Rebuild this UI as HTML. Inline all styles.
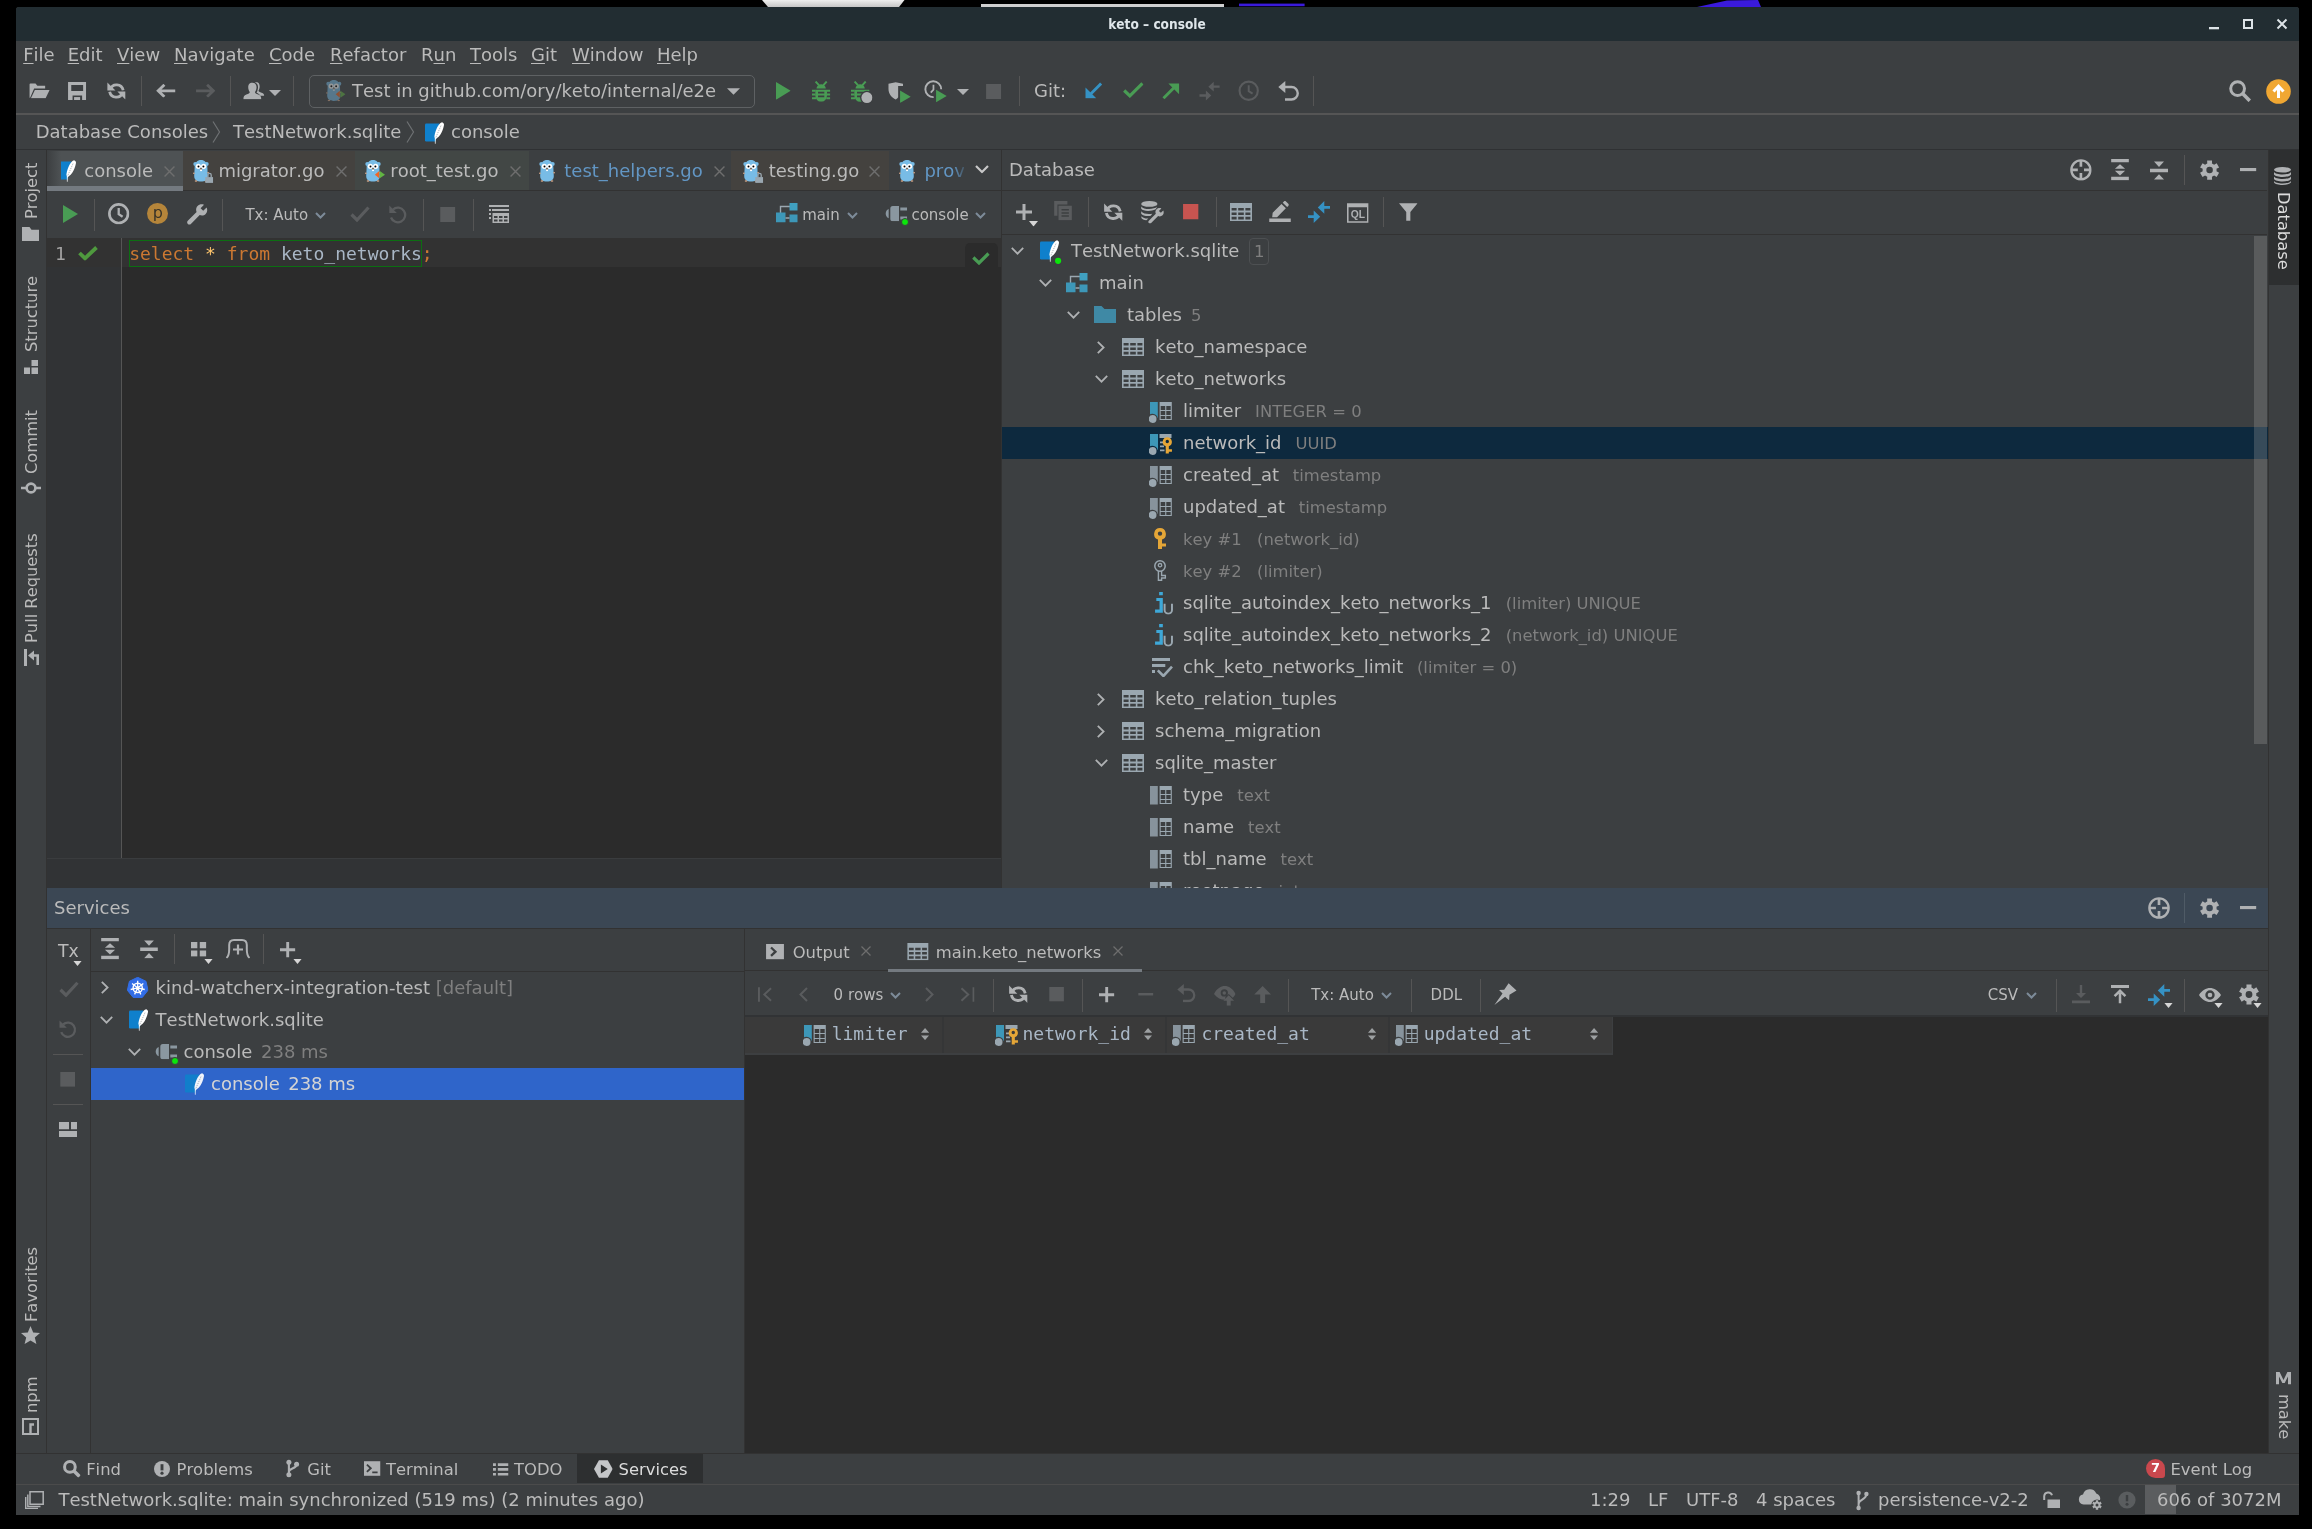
<!DOCTYPE html>
<html lang="en"><head><meta charset="utf-8"><title>keto – console</title>
<style>
*{box-sizing:border-box;margin:0;padding:0}
html,body{width:2312px;height:1529px;overflow:hidden;background:#000}
body{position:relative;font-family:"DejaVu Sans","Liberation Sans",sans-serif;font-size:18px;color:#bbbbbb;font-kerning:none;font-variant-ligatures:none;-webkit-font-smoothing:antialiased}
#root{position:absolute;left:0;top:0;width:2312px;height:1529px;will-change:transform}
.a{position:absolute}
.t{position:absolute;white-space:pre;line-height:32px;height:32px}
.g{color:#7f7f7f}
.mono{font-family:"DejaVu Sans Mono","Liberation Mono",monospace}
.vsep{position:absolute;width:1px;background:#555555}
.hl{position:absolute;height:1px}
svg{position:absolute;overflow:visible}
u{text-decoration:underline;text-underline-offset:2px;text-decoration-thickness:1px}
.rot{position:absolute;white-space:pre;transform-origin:0 0;line-height:20px;height:20px}
</style></head>
<body>
<div id="root">
<svg width="0" height="0" style="position:absolute"><defs>
<symbol id="i-folderopen" viewBox="0 0 22 17"><path d="M0 16 V1.5 Q0 0.5 1 0.5 H6.5 L8.5 3 H17 V6 H5 L0.6 16 Z" fill="#afb1b3"/><path d="M5.8 7.5 H21.8 L17.5 16.5 H1.5 Z" fill="#afb1b3"/></symbol>
<symbol id="i-save" viewBox="0 0 18 18"><path fill-rule="evenodd" d="M0 0 H18 V18 H0 Z M3.2 3 V9 H15 V3 Z M4.5 13.5 V18 H14 V13.5 Z" fill="#afb1b3"/><rect x="6" y="15" width="6" height="3" fill="#afb1b3"/></symbol>
<symbol id="i-refresh" viewBox="0 0 18.6 18.2"><path d="M2.9 7.6 A6.9 6.9 0 0 1 16.2 8.4" fill="none" stroke="#afb1b3" stroke-width="2.9"/><path d="M0.1 0.5 L0.1 8.7 L8.3 8.7 Z" fill="#afb1b3"/><path d="M15.7 10.8 A6.9 6.9 0 0 1 2.4 10" fill="none" stroke="#afb1b3" stroke-width="2.9"/><path d="M18.5 17.9 L18.5 9.7 L10.3 9.7 Z" fill="#afb1b3"/></symbol>
<symbol id="i-back" viewBox="0 0 20 14"><path d="M8.6 0.8 L2.2 7 L8.6 13.2 M2.5 7 H20" fill="none" stroke="#afb1b3" stroke-width="2.9"/></symbol>
<symbol id="i-fwd" viewBox="0 0 20 14"><path d="M11.4 0.8 L17.8 7 L11.4 13.2 M17.5 7 H0" fill="none" stroke="#5a5c5e" stroke-width="2.9"/></symbol>
<symbol id="i-users" viewBox="0 0 22 18"><path d="M13.5 0.3 C16.3 0.3 17 2.5 17 4.5 C17 6.5 16.3 8 15.8 8.6 C15.8 9.8 17 10.2 19 11 C21 11.8 21.6 12.6 21.6 14 H17.5 C17 12.5 15.5 11.8 13.8 11 C14.8 9.5 15.3 7 15.3 5 C15.3 3 14.5 1.2 12 0.6 Z" fill="#afb1b3"/><path d="M9.6 0.8 C12.8 0.8 13.8 3 13.8 5.4 C13.8 7.6 13 9.3 12.2 10.2 C12.2 11.6 13.4 12 15.6 12.9 C18 13.9 18.6 15 18.6 17.7 H0.4 C0.4 15 1 13.9 3.4 12.9 C5.6 12 6.9 11.6 6.9 10.2 C6.1 9.3 5.3 7.6 5.3 5.4 C5.3 3 6.4 0.8 9.6 0.8 Z" fill="#afb1b3"/></symbol>
<symbol id="i-tridown" viewBox="0 0 12 6"><path d="M0 0 H12 L6 6 Z" fill="#afb1b3"/></symbol>
<symbol id="i-run" viewBox="0 0 15 18"><path d="M0 0 L15 9 L0 18 Z" fill="#499c54"/></symbol>
<symbol id="i-stopgray" viewBox="0 0 16 16"><rect width="16" height="16" fill="#5a5c5e"/></symbol>
<symbol id="i-bug" viewBox="0 0 18.3 20.8"><path d="M3.6 0.5 L6.9 4.2 M14.7 0.5 L11.4 4.2" stroke="#499c54" stroke-width="1.9" fill="none"/><path d="M4.5 7.5 A4.65 4.3 0 0 1 13.8 7.5 Z" fill="#499c54"/><path d="M3.3 8.7 H15 V14.5 A5.85 6.3 0 0 1 3.3 14.5 Z" fill="#499c54"/><path d="M0 9.7 H3.5 M14.8 9.7 H18.3 M0 13.5 H3.5 M14.8 13.5 H18.3 M0 17.3 H4 M14.3 17.3 H18.3" stroke="#499c54" stroke-width="1.9" fill="none"/><path d="M6 11.6 H12.3 M6 15.4 H12.3" stroke="#3c3f41" stroke-width="1.9"/></symbol>
<symbol id="i-bugrun" viewBox="0 0 21.5 22.2"><path d="M3.6 0.5 L6.9 4.2 M14.7 0.5 L11.4 4.2" stroke="#499c54" stroke-width="1.9" fill="none"/><path d="M4.5 7.5 A4.65 4.3 0 0 1 13.8 7.5 Z" fill="#499c54"/><path d="M3.3 8.7 H15 V14.5 A5.85 6.3 0 0 1 3.3 14.5 Z" fill="#499c54"/><path d="M0 9.7 H3.5 M14.8 9.7 H18.3 M0 13.5 H3.5 M14.8 13.5 H18.3 M0 17.3 H4 M14.3 17.3 H18.3" stroke="#499c54" stroke-width="1.9" fill="none"/><path d="M6 11.6 H12.3 M6 15.4 H12.3" stroke="#3c3f41" stroke-width="1.9"/><circle cx="15.9" cy="16.6" r="6.9" fill="#3c3f41"/><circle cx="15.9" cy="16.6" r="5.5" fill="#afb1b3"/></symbol>
<symbol id="i-coverage" viewBox="0 0 24 21"><path d="M0.5 1.5 L8 0 L15.5 1.5 V4 H10.5 V15.5 C9.5 17 8.5 17.5 8 18 C4 16 0.5 12 0.5 7 Z" fill="#afb1b3"/><path d="M8 2.2 L13.5 3.3 V4 H10.5 V15.3 C9.8 16 9 16.4 8 17 Z" fill="#8a8c8e" opacity="0"/><path d="M12.5 8.5 L23.5 15 L12.5 21.5 Z" fill="#499c54"/></symbol>
<symbol id="i-profile" viewBox="0 0 24 23"><path d="M17.8 9.5 A8.2 8.2 0 1 0 10 17.7" fill="none" stroke="#afb1b3" stroke-width="2"/><path d="M9.8 5 V10 L7 13" fill="none" stroke="#afb1b3" stroke-width="1.8"/><path d="M12.5 10 L23.5 16.5 L12.5 23 Z" fill="#499c54"/></symbol>
<symbol id="i-gitupdate" viewBox="0 0 18 17"><path d="M16.5 1.5 L4 14" stroke="#3592c4" stroke-width="3" fill="none"/><path d="M0.5 16.5 V5.5 L11.5 16.5 Z" fill="#3592c4"/></symbol>
<symbol id="i-gitcommit" viewBox="0 0 21 16"><path d="M1.2 8.5 L7 14 L19.8 1.2" stroke="#499c54" stroke-width="3.2" fill="none"/></symbol>
<symbol id="i-gitpush" viewBox="0 0 18 17"><path d="M1.5 15.5 L14 3" stroke="#499c54" stroke-width="3" fill="none"/><path d="M17.5 0.5 V11.5 L6.5 0.5 Z" fill="#499c54"/></symbol>
<symbol id="i-gitmerge" viewBox="0 0 22 20"><path d="M21 5.5 H12 M0.5 14.5 H9" stroke="#5a5c5e" stroke-width="2.4" fill="none"/><path d="M15 0.5 L9.5 5.5 L15 10.5 Z M7 9.5 L12.5 14.5 L7 19.5 Z" fill="#5a5c5e"/></symbol>
<symbol id="i-historyoff" viewBox="0 0 22 22"><circle cx="11" cy="11" r="9.4" fill="none" stroke="#5a5c5e" stroke-width="2.2"/><path d="M11 5.5 V11.5 L15 14" fill="none" stroke="#5a5c5e" stroke-width="2"/></symbol>
<symbol id="i-rollback" viewBox="0 0 21 20"><path d="M5 6 H13.5 A6 6 0 0 1 13.5 18.5 H7" fill="none" stroke="#afb1b3" stroke-width="2.4"/><path d="M0.3 6 L7.3 0 V12 Z" fill="#afb1b3"/></symbol>
<symbol id="i-search" viewBox="0 0 22 22"><circle cx="8.6" cy="8.6" r="6.9" fill="none" stroke="#afb1b3" stroke-width="3"/><path d="M13.3 13.3 L20.8 20.8" stroke="#afb1b3" stroke-width="3.6"/></symbol>
<symbol id="i-updatebadge" viewBox="0 0 25 25"><circle cx="12.5" cy="12.5" r="12.3" fill="#f0a732"/><path d="M12.5 19 V8 M7.5 12.5 L12.5 7.2 L17.5 12.5" fill="none" stroke="#fff" stroke-width="3"/></symbol>
<symbol id="i-navsep" viewBox="0 0 10 22"><path d="M2 0.5 L8.5 11 L2 21.5" fill="none" stroke="#6e7173" stroke-width="1.2"/></symbol>
<symbol id="i-sqlite" viewBox="0 0 20 22.5"><path d="M0 2.7 Q0 1.5 1.2 1.5 H14.5 L10.6 19.5 H1.2 Q0 19.5 0 18.3 Z" fill="#0f80cc"/><path d="M17 0.3 C18.5 0.7 19.4 2 18.9 3.4 C18.2 7.2 16.6 10.5 15.6 12.2 C14.4 14.1 13 15.5 11.7 16.2 L10.7 17.6 L10.6 21.8 L9.9 21.8 L9.8 16 C9.3 15 9.4 14.3 9.5 13.8 C10 10.5 11 8 11.8 6.3 C13 3.5 15 1 17 0.3 Z" fill="#ffffff"/><path d="M16 3.6 L10.6 16" fill="none" stroke="#8e959b" stroke-width="0.7" stroke-dasharray="1.3 1"/></symbol>
<symbol id="i-gopher" viewBox="0 0 16 22"><circle cx="2.3" cy="3.9" r="2" fill="#78bce6"/><circle cx="13.7" cy="3.9" r="2" fill="#78bce6"/><path d="M1.6 8 C1.6 2.5 4.5 0 8 0 C11.5 0 14.4 2.5 14.4 8 C14.4 11 14.8 13 14.8 16 C14.8 20 12 21.6 8 21.6 C4 21.6 1.2 20 1.2 16 C1.2 13 1.6 11 1.6 8 Z" fill="#78bce6"/><circle cx="5.3" cy="6.3" r="2.6" fill="#fff"/><circle cx="10.6" cy="6.3" r="2.6" fill="#fff"/><circle cx="5.5" cy="6.4" r="1" fill="#000"/><circle cx="10.4" cy="6.4" r="1" fill="#000"/><ellipse cx="8" cy="8.9" rx="1.2" ry="0.9" fill="#c69c7c"/><ellipse cx="8" cy="8.3" rx="0.9" ry="0.5" fill="#444"/><rect x="7.1" y="9.8" width="1.9" height="1.3" fill="#fff"/><ellipse cx="0.9" cy="13.3" rx="0.9" ry="0.7" fill="#d9a98a"/><ellipse cx="15.1" cy="12.8" rx="0.9" ry="0.7" fill="#d9a98a"/><ellipse cx="3" cy="21" rx="1.3" ry="0.8" fill="#d9a98a"/><ellipse cx="13" cy="21" rx="1.3" ry="0.8" fill="#d9a98a"/></symbol>
<symbol id="i-gopher_run" viewBox="0 0 20 22"><circle cx="2.3" cy="3.9" r="2" fill="#78bce6"/><circle cx="13.7" cy="3.9" r="2" fill="#78bce6"/><path d="M1.6 8 C1.6 2.5 4.5 0 8 0 C11.5 0 14.4 2.5 14.4 8 C14.4 11 14.8 13 14.8 16 C14.8 20 12 21.6 8 21.6 C4 21.6 1.2 20 1.2 16 C1.2 13 1.6 11 1.6 8 Z" fill="#78bce6"/><circle cx="5.3" cy="6.3" r="2.6" fill="#fff"/><circle cx="10.6" cy="6.3" r="2.6" fill="#fff"/><circle cx="5.5" cy="6.4" r="1" fill="#000"/><circle cx="10.4" cy="6.4" r="1" fill="#000"/><ellipse cx="8" cy="8.9" rx="1.2" ry="0.9" fill="#c69c7c"/><ellipse cx="8" cy="8.3" rx="0.9" ry="0.5" fill="#444"/><rect x="7.1" y="9.8" width="1.9" height="1.3" fill="#fff"/><ellipse cx="0.9" cy="13.3" rx="0.9" ry="0.7" fill="#d9a98a"/><ellipse cx="15.1" cy="12.8" rx="0.9" ry="0.7" fill="#d9a98a"/><ellipse cx="3" cy="21" rx="1.3" ry="0.8" fill="#d9a98a"/><ellipse cx="13" cy="21" rx="1.3" ry="0.8" fill="#d9a98a"/><path d="M14.2 11.1 L9.9 14.7 L14.2 18.3 Z" fill="#f26522"/><path d="M14.8 11.1 L20 14.7 L14.8 18.3 Z" fill="#62b543"/></symbol>
<symbol id="i-gopher_run_dim" viewBox="0 0 20 22"><circle cx="2.3" cy="3.9" r="2" fill="#78bce6"/><circle cx="13.7" cy="3.9" r="2" fill="#78bce6"/><path d="M1.6 8 C1.6 2.5 4.5 0 8 0 C11.5 0 14.4 2.5 14.4 8 C14.4 11 14.8 13 14.8 16 C14.8 20 12 21.6 8 21.6 C4 21.6 1.2 20 1.2 16 C1.2 13 1.6 11 1.6 8 Z" fill="#78bce6"/><circle cx="5.3" cy="6.3" r="2.6" fill="#fff"/><circle cx="10.6" cy="6.3" r="2.6" fill="#fff"/><circle cx="5.5" cy="6.4" r="1" fill="#000"/><circle cx="10.4" cy="6.4" r="1" fill="#000"/><ellipse cx="8" cy="8.9" rx="1.2" ry="0.9" fill="#c69c7c"/><ellipse cx="8" cy="8.3" rx="0.9" ry="0.5" fill="#444"/><rect x="7.1" y="9.8" width="1.9" height="1.3" fill="#fff"/><ellipse cx="0.9" cy="13.3" rx="0.9" ry="0.7" fill="#d9a98a"/><ellipse cx="15.1" cy="12.8" rx="0.9" ry="0.7" fill="#d9a98a"/><ellipse cx="3" cy="21" rx="1.3" ry="0.8" fill="#d9a98a"/><ellipse cx="13" cy="21" rx="1.3" ry="0.8" fill="#d9a98a"/><path d="M14.2 11.1 L9.9 14.7 L14.2 18.3 Z" fill="#f26522"/><path d="M14.8 11.1 L20 14.7 L14.8 18.3 Z" fill="#62b543"/></symbol>
<symbol id="i-gopher_lock" viewBox="0 0 20.4 23"><circle cx="2.3" cy="3.9" r="2" fill="#78bce6"/><circle cx="13.7" cy="3.9" r="2" fill="#78bce6"/><path d="M1.6 8 C1.6 2.5 4.5 0 8 0 C11.5 0 14.4 2.5 14.4 8 C14.4 11 14.8 13 14.8 16 C14.8 20 12 21.6 8 21.6 C4 21.6 1.2 20 1.2 16 C1.2 13 1.6 11 1.6 8 Z" fill="#78bce6"/><circle cx="5.3" cy="6.3" r="2.6" fill="#fff"/><circle cx="10.6" cy="6.3" r="2.6" fill="#fff"/><circle cx="5.5" cy="6.4" r="1" fill="#000"/><circle cx="10.4" cy="6.4" r="1" fill="#000"/><ellipse cx="8" cy="8.9" rx="1.2" ry="0.9" fill="#c69c7c"/><ellipse cx="8" cy="8.3" rx="0.9" ry="0.5" fill="#444"/><rect x="7.1" y="9.8" width="1.9" height="1.3" fill="#fff"/><ellipse cx="0.9" cy="13.3" rx="0.9" ry="0.7" fill="#d9a98a"/><ellipse cx="15.1" cy="12.8" rx="0.9" ry="0.7" fill="#d9a98a"/><ellipse cx="3" cy="21" rx="1.3" ry="0.8" fill="#d9a98a"/><ellipse cx="13" cy="21" rx="1.3" ry="0.8" fill="#d9a98a"/><path d="M15 17.5 V15 A1.6 1.6 0 0 1 18.2 15 V17.5" fill="none" stroke="#9aa7b0" stroke-width="1.3"/><rect x="12.3" y="17.1" width="7.8" height="5.8" fill="#9aa7b0"/></symbol>
<symbol id="i-sfolder" viewBox="0 0 17 14"><path d="M0 0 H7.5 L9.5 2.7 H17 V14 H0 Z" fill="#afb1b3"/></symbol>
<symbol id="i-sstructure" viewBox="0 0 14 14"><rect x="7.5" y="0" width="6.5" height="6" fill="#afb1b3"/><rect x="0" y="7.5" width="6" height="6.5" fill="#afb1b3"/><rect x="7.5" y="7.5" width="6.5" height="6.5" fill="#afb1b3"/></symbol>
<symbol id="i-scommit" viewBox="0 0 20 12"><circle cx="10" cy="6" r="4.4" fill="none" stroke="#afb1b3" stroke-width="2.6"/><path d="M0 6 H5 M15 6 H20" stroke="#afb1b3" stroke-width="2.4"/></symbol>
<symbol id="i-spull" viewBox="0 0 15 17"><path d="M0 0 H3 V17 H0 Z" fill="#afb1b3"/><path d="M4 6.5 L10 1.5 V11.5 Z" fill="#afb1b3"/><path d="M9 6.5 H13.7 V16" fill="none" stroke="#afb1b3" stroke-width="2.6"/></symbol>
<symbol id="i-sstar" viewBox="0 0 19 18"><path d="M9.5 0 L12.2 6.4 L19 7 L13.8 11.5 L15.4 18 L9.5 14.4 L3.6 18 L5.2 11.5 L0 7 L6.8 6.4 Z" fill="#afb1b3"/></symbol>
<symbol id="i-snpm" viewBox="0 0 17 17"><rect x="1" y="1" width="15" height="15" fill="none" stroke="#afb1b3" stroke-width="2"/><path d="M8.5 16 V6.5 H12" fill="none" stroke="#afb1b3" stroke-width="2.4"/></symbol>
<symbol id="i-sdb" viewBox="0 0 17 18"><ellipse cx="8.5" cy="2.8" rx="8.5" ry="2.8" fill="#afb1b3"/><path d="M0 5 C1.5 8.3 15.5 8.3 17 5 V7.5 C15.5 10.8 1.5 10.8 0 7.5 Z M0 9.5 C1.5 12.8 15.5 12.8 17 9.5 V12 C15.5 15.3 1.5 15.3 0 12 Z M0 14 C1.5 17.3 15.5 17.3 17 14 V15.2 C15.5 18.8 1.5 18.8 0 15.2 Z" fill="#afb1b3"/></symbol>
<symbol id="i-smake" viewBox="0 0 15 12.5"><path d="M0 12.5 V0 H3.6 L7.5 8 L11.4 0 H15 V12.5 H12 V4.5 L8.7 11 H6.3 L3 4.5 V12.5 Z" fill="#afb1b3"/></symbol>
<symbol id="i-closex" viewBox="0 0 10 10"><path d="M0.5 0.5 L9.5 9.5 M9.5 0.5 L0.5 9.5" stroke="#6e6e6e" stroke-width="1.3" fill="none"/></symbol>
<symbol id="i-chevdown_l" viewBox="0 0 14 8.5"><path d="M1 1 L7 7 L13 1" stroke="#c8c8c8" stroke-width="2.2" fill="none"/></symbol>
<symbol id="i-chev" viewBox="0 0 11 7"><path d="M1 1 L5.5 5.5 L10 1" stroke="#7d8b99" stroke-width="2" fill="none"/></symbol>
<symbol id="i-clock" viewBox="0 0 21.4 21.4"><circle cx="10.7" cy="10.7" r="9.3" fill="none" stroke="#afb1b3" stroke-width="2.7"/><path d="M10.7 5 V11.2 L14.6 13.8" fill="none" stroke="#afb1b3" stroke-width="2.3"/></symbol>
<symbol id="i-wrench" viewBox="0 0 21 21"><path d="M19.6 3.4 L16.2 6.8 L13.6 4.2 L17 0.8 C14.6 -0.2 12 0.5 10.6 2 C9 3.6 8.7 6 9.6 8 L0.8 16.8 C-0.1 17.7 -0.1 19 0.8 19.9 C1.7 20.8 3 20.8 3.9 19.9 L12.7 11.1 C14.7 12 17.1 11.6 18.7 10 C20.3 8.4 20.7 5.6 19.6 3.4 Z" fill="#afb1b3"/></symbol>
<symbol id="i-checkoff" viewBox="0 0 20 16"><path d="M1.5 8.5 L7 14 L18.5 1.5" stroke="#5a5c5e" stroke-width="3.2" fill="none"/></symbol>
<symbol id="i-undooff" viewBox="0 0 18 19"><path d="M4 4.5 A7.3 7.3 0 1 1 2 12.5" fill="none" stroke="#5a5c5e" stroke-width="2.3"/><path d="M0.3 0.5 V8 H7.8 Z" fill="#5a5c5e"/></symbol>
<symbol id="i-tableview" viewBox="0 0 20 18"><path d="M0 0 H20 V2 H0 Z M3 4 H20 V6 H3 Z M0 4 H2 V6 H0 Z M0 8 H2 V10 H0 Z M0 12 H2 V14 H0 Z" fill="#afb1b3"/><path fill-rule="evenodd" d="M3.5 8 H20 V18 H3.5 Z M5 11 V13 H8.5 V11 Z M10 11 V13 H13.5 V11 Z M15 11 V13 H18.5 V11 Z M5 14.5 V16.5 H8.5 V14.5 Z M10 14.5 V16.5 H13.5 V14.5 Z M15 14.5 V16.5 H18.5 V14.5 Z" fill="#afb1b3"/></symbol>
<symbol id="i-schema" viewBox="0 0 22 19.5"><path d="M4.5 10 V3.5 H14" fill="none" stroke="#9aa7b0" stroke-width="1.4"/><rect x="13.5" y="0" width="8" height="7.5" fill="#40a0c0"/><rect x="0" y="9.5" width="9.5" height="10" fill="#3d97b8"/><rect x="13.5" y="11.5" width="8" height="8" fill="#3d97b8"/><path d="M9.5 15 H13.5" stroke="#9aa7b0" stroke-width="1.4"/></symbol>
<symbol id="i-session" viewBox="0 0 22.2 15.3"><path d="M3.7 2.9 V12.3 C-0.3 11 -0.3 4.2 3.7 2.9 Z M7.8 0 H14 V15.3 H7.8 Q5.3 15.3 5.3 12.8 V2.5 Q5.3 0 7.8 0 Z M15.3 1.4 H22.2 V4.5 H15.3 Z M15.3 10.6 H22.2 V13.5 H15.3 Z" fill="#8a97a0"/></symbol>
<symbol id="i-gcheck" viewBox="0 0 20 14.5"><path d="M1.5 7 L7 12.3 L18.5 1.5" stroke="#4f9a3e" stroke-width="3.8" fill="none"/></symbol>
<symbol id="i-gcheck2" viewBox="0 0 18 13.5"><path d="M1.3 5.5 L7 11 L16.5 1.5" stroke="#499c54" stroke-width="3.2" fill="none"/></symbol>
<symbol id="i-gear" viewBox="0 0 20 21"><path fill-rule="evenodd" d="M6.52 4.08 L7.56 3.62 L7.42 0.53 L12.58 0.53 L12.44 3.62 L13.48 4.08 L13.81 4.28 L14.74 4.95 L17.35 3.28 L19.92 7.75 L17.18 9.17 L17.30 10.31 L17.30 10.69 L17.18 11.83 L19.92 13.25 L17.35 17.72 L14.74 16.05 L13.81 16.72 L13.48 16.92 L12.44 17.38 L12.58 20.47 L7.42 20.47 L7.56 17.38 L6.52 16.92 L6.19 16.72 L5.26 16.05 L2.65 17.72 L0.08 13.25 L2.82 11.83 L2.70 10.69 L2.70 10.31 L2.82 9.17 L0.08 7.75 L2.65 3.28 L5.26 4.95 L6.19 4.28 Z M13.40 10.50 A3.40 3.40 0 1 0 6.60 10.50 A3.40 3.40 0 1 0 13.40 10.50 Z" fill="#afb1b3"/></symbol>
<symbol id="i-target" viewBox="0 0 22 22"><circle cx="11" cy="11" r="9.6" fill="none" stroke="#afb1b3" stroke-width="2.4"/><path d="M11 1.5 V7.9 M11 14.1 V20.5 M1.5 11 H7.9 M14.1 11 H20.5" stroke="#afb1b3" stroke-width="2.7"/></symbol>
<symbol id="i-expandall" viewBox="0 0 18 22"><path d="M0 0 H18 V3.4 H0 Z M0 18.2 H18 V21.6 H0 Z M9 5.3 L14.2 10 H3.8 Z M9 16.8 L14.2 12 H3.8 Z" fill="#afb1b3"/></symbol>
<symbol id="i-collapseall" viewBox="0 0 18 19"><path d="M0 7.7 H18 V11.3 H0 Z M9 6 L14 0.4 H4 Z M9 13.3 L14 18.6 H4 Z" fill="#afb1b3"/></symbol>
<symbol id="i-minus" viewBox="0 0 18 4"><rect width="18" height="3.6" fill="#afb1b3"/></symbol>
<symbol id="i-plus" viewBox="0 0 16 16"><path d="M8 0 V16 M0 8 H16" stroke="#afb1b3" stroke-width="3"/></symbol>
<symbol id="i-minitri" viewBox="0 0 9 5.5"><path d="M0 0 H9 L4.5 5.5 Z" fill="#d6d6d6"/></symbol>
<symbol id="i-copyoff" viewBox="0 0 18 20"><path d="M0 0 H13.5 V15 H0 Z" fill="#5a5c5e"/><path d="M3.3 3.7 H18 V20 H3.3 Z" fill="#3c3f41"/><path fill-rule="evenodd" d="M4.4 4.8 H18 V19.6 H4.4 Z M7.5 8.2 V9.8 H15 V8.2 Z M7.5 11.4 V13 H15 V11.4 Z M7.5 14.6 V16.2 H15 V14.6 Z" fill="#5a5c5e"/></symbol>
<symbol id="i-refresh2" viewBox="0 0 18.6 18.2"><path d="M2.9 7.6 A6.9 6.9 0 0 1 16.2 8.4" fill="none" stroke="#afb1b3" stroke-width="2.9"/><path d="M0.1 0.5 L0.1 8.7 L8.3 8.7 Z" fill="#afb1b3"/><path d="M15.7 10.8 A6.9 6.9 0 0 1 2.4 10" fill="none" stroke="#afb1b3" stroke-width="2.9"/><path d="M18.5 17.9 L18.5 9.7 L10.3 9.7 Z" fill="#afb1b3"/></symbol>
<symbol id="i-dbwrench" viewBox="0 0 24 23"><ellipse cx="8.5" cy="3" rx="8.3" ry="3" fill="#afb1b3"/><path d="M0.2 5.5 C2 8.8 13 9 16.5 6 L15 8.5 C10 11 2 10.5 0.2 8 Z M0.2 10.5 C2 13.3 8 13.8 11.5 13 L10 15.2 C6 15.8 1.5 15 0.2 13 Z M0.4 15.5 C2 17.5 5 18 7.5 17.8 L5.5 19.8 C3 19.5 1 18.5 0.4 17.5 Z" fill="#afb1b3"/><path d="M22.8 9.6 L20.3 12.1 L18.3 10.1 L20.8 7.6 C19 6.9 17 7.4 15.9 8.5 C14.7 9.7 14.4 11.5 15.1 13 L8 20.1 C7.3 20.8 7.3 21.8 8 22.5 C8.7 23.2 9.7 23.2 10.4 22.5 L17.5 15.4 C19 16.1 20.8 15.8 22 14.6 C23.2 13.4 23.6 11.3 22.8 9.6 Z" fill="#afb1b3"/></symbol>
<symbol id="i-stopred" viewBox="0 0 16 16"><rect width="16" height="16" fill="#c75450"/></symbol>
<symbol id="i-table" viewBox="0 0 22 18"><path fill-rule="evenodd" d="M0 0 H22 V18 H0 Z M1.6 5 V7.6 H6.6 V5 Z M8.2 5 V7.6 H13.8 V5 Z M15.4 5 V7.6 H20.4 V5 Z M1.6 9.4 V12 H6.6 V9.4 Z M8.2 9.4 V12 H13.8 V9.4 Z M15.4 9.4 V12 H20.4 V9.4 Z M1.6 13.8 V16.4 H6.6 V13.8 Z M8.2 13.8 V16.4 H13.8 V13.8 Z M15.4 13.8 V16.4 H20.4 V13.8 Z" fill="#9aa7b0"/></symbol>
<symbol id="i-pencil" viewBox="0 0 22 22"><path d="M0 18 H22 V21.5 H0 Z" fill="#afb1b3"/><path d="M3 16.5 L3.5 12 L12.5 3 L17 7.5 L8 16.5 Z M13.8 1.7 L15 0.5 C15.6 -0.1 16.5 -0.1 17.1 0.5 L19.5 2.9 C20.1 3.5 20.1 4.4 19.5 5 L18.3 6.2 Z" fill="#afb1b3"/></symbol>
<symbol id="i-bluearrows" viewBox="0 0 22 22"><path d="M22 5.3 H13 V8.3 H22 Z M16.3 0 L9.8 6.8 L16.3 13.5 Z M0 15.2 H9 V18.2 H0 Z M5.7 10 L12.2 16.7 L5.7 23.4 Z" fill="#3592c4" transform="scale(1,0.94)"/></symbol>
<symbol id="i-ql" viewBox="0 0 22 20"><path fill-rule="evenodd" d="M0 0 H22 V20 H0 Z M1.6 4.2 V18.4 H20.4 V4.2 Z" fill="#afb1b3"/><text x="11" y="15.2" text-anchor="middle" font-family="Liberation Sans, DejaVu Sans, sans-serif" font-weight="bold" font-size="10.5" fill="#afb1b3">QL</text></symbol>
<symbol id="i-filter" viewBox="0 0 19 18"><path d="M0 0 H19 L11.6 9 V18 H7.4 V9 Z" fill="#afb1b3"/></symbol>
<symbol id="i-tchevd" viewBox="0 0 13 8"><path d="M0.8 0.8 L6.5 6.6 L12.2 0.8" stroke="#afb1b3" stroke-width="1.8" fill="none"/></symbol>
<symbol id="i-tchevr" viewBox="0 0 8 13"><path d="M0.8 0.8 L6.6 6.5 L0.8 12.2" stroke="#afb1b3" stroke-width="1.8" fill="none"/></symbol>
<symbol id="i-tfolder" viewBox="0 0 22 17"><path d="M0 0 H7.5 L10.5 3 H22 V17 H0 Z" fill="#3f89a5"/></symbol>
<symbol id="i-sqlite_dot" viewBox="0 0 22 24.5"><path d="M0 2.7 Q0 1.5 1.2 1.5 H14.5 L10.6 19.5 H1.2 Q0 19.5 0 18.3 Z" fill="#0f80cc"/><path d="M17 0.3 C18.5 0.7 19.4 2 18.9 3.4 C18.2 7.2 16.6 10.5 15.6 12.2 C14.4 14.1 13 15.5 11.7 16.2 L10.7 17.6 L10.6 21.8 L9.9 21.8 L9.8 16 C9.3 15 9.4 14.3 9.5 13.8 C10 10.5 11 8 11.8 6.3 C13 3.5 15 1 17 0.3 Z" fill="#ffffff"/><path d="M16 3.6 L10.6 16" fill="none" stroke="#8e959b" stroke-width="0.7" stroke-dasharray="1.3 1"/><circle cx="18.1" cy="20.8" r="4.2" fill="#3c3f41"/><circle cx="18.1" cy="20.8" r="3.1" fill="#0be50b"/></symbol>
<symbol id="i-col_idx" viewBox="0 0 23 21"><rect x="1" y="0" width="7.8" height="16" fill="#3d97b8"/><path fill-rule="evenodd" d="M10.6 0 H22.8 V18 H10.6 Z M11.7 4 V8 H16.2 V4 Z M11.7 9 V13 H16.2 V9 Z M11.7 14 V17 H16.2 V14 Z M17.3 4 V8 H21.7 V4 Z M17.3 9 V13 H21.7 V9 Z M17.3 14 V17 H21.7 V14 Z " fill="#9aa7b0"/><circle cx="3.6" cy="17" r="5.2" fill="#3c3f41"/><circle cx="3.6" cy="17" r="3.9" fill="#9aa7b0"/></symbol>
<symbol id="i-col_nn" viewBox="0 0 23 21"><rect x="1" y="0" width="7.8" height="16" fill="#87939c"/><path fill-rule="evenodd" d="M10.6 0 H22.8 V18 H10.6 Z M11.7 4 V8 H16.2 V4 Z M11.7 9 V13 H16.2 V9 Z M11.7 14 V17 H16.2 V14 Z M17.3 4 V8 H21.7 V4 Z M17.3 9 V13 H21.7 V9 Z M17.3 14 V17 H21.7 V14 Z " fill="#9aa7b0"/><circle cx="3.6" cy="17" r="5.2" fill="#3c3f41"/><circle cx="3.6" cy="17" r="3.9" fill="#9aa7b0"/></symbol>
<symbol id="i-col" viewBox="0 0 23 21"><rect x="1" y="0" width="7.8" height="18.5" fill="#87939c"/><path fill-rule="evenodd" d="M10.6 0 H22.8 V18 H10.6 Z M11.7 4 V8 H16.2 V4 Z M11.7 9 V13 H16.2 V9 Z M11.7 14 V17 H16.2 V14 Z M17.3 4 V8 H21.7 V4 Z M17.3 9 V13 H21.7 V9 Z M17.3 14 V17 H21.7 V14 Z " fill="#9aa7b0"/></symbol>
<symbol id="i-col_pk" viewBox="0 0 23 21"><rect x="1" y="0" width="8" height="16" fill="#3d97b8"/><path d="M10.5 0 H22.5 V4 H10.5 Z M11 7.5 H15 V9.3 H11 Z M11 11.5 H15 V13.3 H11 Z M11 15.5 H15.5 V17.3 H11 Z" fill="#9aa7b0"/><circle cx="3.6" cy="17" r="5.2" fill="#0d293e"/><circle cx="3.6" cy="17" r="3.9" fill="#9aa7b0"/><g transform="translate(13.6,3.2) scale(0.78)"><path fill-rule="evenodd" d="M6 0 A6 6 0 0 1 8 11.6 V15.5 H12 V18.6 H8 V21 H4 V11.6 A6 6 0 0 1 6 0 Z M6 3.4 A2.2 2.2 0 0 0 6 7.8 A2.2 2.2 0 0 0 6 3.4 Z" fill="#e5a637"/></g></symbol>
<symbol id="i-key" viewBox="0 0 12.5 21"><path fill-rule="evenodd" d="M6 0 A6 6 0 0 1 8 11.6 V15.5 H12 V18.6 H8 V21 H4 V11.6 A6 6 0 0 1 6 0 Z M6 3.4 A2.2 2.2 0 0 0 6 7.8 A2.2 2.2 0 0 0 6 3.4 Z" fill="#e5a637"/></symbol>
<symbol id="i-keyo" viewBox="0 0 12.5 21"><circle cx="6" cy="6" r="5.2" fill="none" stroke="#9aa7b0" stroke-width="1.5"/><circle cx="6" cy="5.2" r="1.7" fill="none" stroke="#9aa7b0" stroke-width="1.3"/><path d="M4.4 11 V20.3 H7.6 V18 H11.4 V15.5 H7.6 V11" fill="none" stroke="#9aa7b0" stroke-width="1.4"/></symbol>
<symbol id="i-index" viewBox="0 0 19 23"><path d="M4.2 0 H8 V3.4 H4.2 Z M1.3 6.2 H8 V21.2 H0 V18 H4.6 V9.3 H1.3 Z" fill="#3ea8d8"/><path d="M9.8 12 V18.5 A3.7 3.7 0 0 0 17.4 18.5 V12" fill="none" stroke="#9aa7b0" stroke-width="2"/></symbol>
<symbol id="i-chk" viewBox="0 0 21 19"><path d="M0 0 H18 V2.9 H0 Z M0 6 H13.3 V8.9 H0 Z M0 12 H3 V15 H0 Z" fill="#9aa7b0"/><path d="M5.8 12.4 L11.4 18 L20 8.6" fill="none" stroke="#9aa7b0" stroke-width="2.6"/></symbol>
<symbol id="i-undooff2" viewBox="0 0 18 19"><path d="M4 4.5 A7.3 7.3 0 1 1 2 12.5" fill="none" stroke="#5a5c5e" stroke-width="2.4"/><path d="M0.3 0.5 V8 H7.8 Z" fill="#5a5c5e"/></symbol>
<symbol id="i-layout" viewBox="0 0 18 15"><path d="M0 0 H10 V7.3 H0 Z M12 0 H18 V7.3 H12 Z M0 9 H18 V15 H0 Z" fill="#afb1b3"/></symbol>
<symbol id="i-groupby" viewBox="0 0 16 15"><path d="M0 0 H6.5 V6.2 H0 Z M9 0 H15.6 V6.2 H9 Z M0 8.6 H6.5 V14.8 H0 Z M9 8.6 H15.6 V14.8 H9 Z" fill="#afb1b3"/></symbol>
<symbol id="i-newtab" viewBox="0 0 24 19.5"><path d="M0.5 19 C3 17 3.2 14 3.2 10 V6 C3.2 2.5 5 1 8 1 H16 C19 1 20.8 2.5 20.8 6 V10 C20.8 14 21 17 23.5 19" fill="none" stroke="#afb1b3" stroke-width="2"/><path d="M12 5.5 V15.5 M7 10.5 H17" stroke="#afb1b3" stroke-width="2.2"/></symbol>
<symbol id="i-k8s" viewBox="0 0 21.4 21.5"><path d="M10.70 0.30 L18.99 4.29 L21.03 13.26 L15.30 20.45 L6.10 20.45 L0.37 13.26 L2.41 4.29 Z" fill="#326de6" stroke="#326de6" stroke-width="1" stroke-linejoin="round"/><circle cx="10.7" cy="10.9" r="4.6" fill="none" stroke="#fff" stroke-width="1.5"/><path d="M10.7 10.9 L10.70 3.70 M10.7 10.9 L16.33 6.41 M10.7 10.9 L17.72 12.50 M10.7 10.9 L13.82 17.39 M10.7 10.9 L7.58 17.39 M10.7 10.9 L3.68 12.50 M10.7 10.9 L5.07 6.41 " stroke="#fff" stroke-width="1.3"/><circle cx="10.7" cy="10.9" r="1.3" fill="#fff"/></symbol>
<symbol id="i-outputic" viewBox="0 0 18 15.5"><rect width="18" height="15.5" fill="#afb1b3"/><path d="M5 3.5 L9.5 7.7 L5 12" fill="none" stroke="#3c3f41" stroke-width="2.3"/></symbol>
<symbol id="i-firstoff" viewBox="0 0 15 15"><path d="M1 0 V15" stroke="#5a5c5e" stroke-width="2"/><path d="M13.5 1 L6.5 7.5 L13.5 14" fill="none" stroke="#5a5c5e" stroke-width="2"/></symbol>
<symbol id="i-lastoff" viewBox="0 0 15 15"><path d="M14 0 V15" stroke="#5a5c5e" stroke-width="2"/><path d="M1.5 1 L8.5 7.5 L1.5 14" fill="none" stroke="#5a5c5e" stroke-width="2"/></symbol>
<symbol id="i-prevoff" viewBox="0 0 9 15"><path d="M8 1 L1.5 7.5 L8 14" fill="none" stroke="#5a5c5e" stroke-width="2"/></symbol>
<symbol id="i-nextoff" viewBox="0 0 9 15"><path d="M1 1 L7.5 7.5 L1 14" fill="none" stroke="#5a5c5e" stroke-width="2"/></symbol>
<symbol id="i-minusoff" viewBox="0 0 16 3"><rect width="16" height="2.8" fill="#5a5c5e"/></symbol>
<symbol id="i-revertoff" viewBox="0 0 19 18.5"><path d="M4.5 5.5 H11.5 A5.7 5.7 0 0 1 11.5 17 H6" fill="none" stroke="#5a5c5e" stroke-width="2.3"/><path d="M0.3 5.5 L6.8 0 V11 Z" fill="#5a5c5e"/></symbol>
<symbol id="i-eyeupoff" viewBox="0 0 22 20"><path fill-rule="evenodd" d="M0 8 C3 2.5 7 0 11 0 C15 0 19 2.5 22 8 C21 10 20 11 19 12 L15 8 L11.5 11.5 V14 C7 14 3 12 0 8 Z M10.5 3.3 A3.7 3.7 0 0 0 10.5 10.7 A3.7 3.7 0 0 0 10.5 3.3 Z" fill="#5a5c5e"/><circle cx="10.5" cy="7" r="1.8" fill="#5a5c5e"/><path d="M15 9.5 L20.5 15 H17 V20 H13 V15 H9.5 Z" fill="#5a5c5e"/></symbol>
<symbol id="i-upoff" viewBox="0 0 17 17.5"><path d="M8.5 0 L17 8.5 H11 V17.5 H6 V8.5 H0 Z" fill="#5a5c5e"/></symbol>
<symbol id="i-pin" viewBox="0 0 23 22.5"><path d="M0.4 22 L8.5 10.5 L5.1 7 L10.2 6.8 L14.6 0.2 L22.5 7.5 L15.5 11.7 L15.1 17.3 L11.1 13.8 Z" fill="#afb1b3"/></symbol>
<symbol id="i-downloadoff" viewBox="0 0 18 18.5"><path d="M7.8 0 H10.2 V8 H14 L9 13 L4 8 H7.8 Z M0 15.5 H18 V18.5 H0 Z" fill="#5a5c5e"/></symbol>
<symbol id="i-upload" viewBox="0 0 18 18.5"><path d="M0 0 H18 V3 H0 Z" fill="#afb1b3"/><path d="M9 18.5 V8 M3.6 11.2 L9 5.8 L14.4 11.2" fill="none" stroke="#afb1b3" stroke-width="2.5"/></symbol>
<symbol id="i-eye" viewBox="0 0 22 14"><path fill-rule="evenodd" d="M0 7 C3 2.3 7 0 11 0 C15 0 19 2.3 22 7 C19 11.7 15 14 11 14 C7 14 3 11.7 0 7 Z M11 2.3 A4.7 4.7 0 0 0 11 11.7 A4.7 4.7 0 0 0 11 2.3 Z" fill="#afb1b3"/><circle cx="11" cy="7" r="2.3" fill="#afb1b3"/></symbol>
<symbol id="i-sortud" viewBox="0 0 8 12"><path d="M4 0 L8 4.6 H0 Z M4 12 L8 7.4 H0 Z" fill="#9da0a2"/></symbol>
<symbol id="i-bsearch" viewBox="0 0 18 18"><circle cx="7.1" cy="7.1" r="5.5" fill="none" stroke="#afb1b3" stroke-width="3.1"/><path d="M11 11 L17 17" stroke="#afb1b3" stroke-width="3.6"/></symbol>
<symbol id="i-bproblems" viewBox="0 0 16 16"><circle cx="8" cy="8" r="8" fill="#afb1b3"/><path d="M8 3.2 V9.4" stroke="#3c3f41" stroke-width="2.9"/><circle cx="8" cy="12.2" r="1.6" fill="#3c3f41"/></symbol>
<symbol id="i-bgit" viewBox="0 0 14 19"><circle cx="3" cy="3" r="2.6" fill="#afb1b3"/><circle cx="3" cy="16" r="2.6" fill="#afb1b3"/><circle cx="11" cy="5" r="2.6" fill="#afb1b3"/><path d="M3 3 V16 M11 5 C11 10 3 9 3 13" fill="none" stroke="#afb1b3" stroke-width="2.2"/></symbol>
<symbol id="i-bterminal" viewBox="0 0 17 15"><rect width="17" height="15" fill="#afb1b3"/><path d="M3 3.5 L7 7.2 L3 11" fill="none" stroke="#3c3f41" stroke-width="1.9"/><path d="M8.5 11.5 H14" stroke="#3c3f41" stroke-width="1.9"/></symbol>
<symbol id="i-btodo" viewBox="0 0 16 13"><path d="M0 0 H3 V2.8 H0 Z M5 0 H16 V2.8 H5 Z M0 5 H3 V7.8 H0 Z M5 5 H16 V7.8 H5 Z M0 10 H3 V12.8 H0 Z M5 10 H16 V12.8 H5 Z" fill="#afb1b3"/></symbol>
<symbol id="i-bservices" viewBox="0 0 19 18"><path d="M5 0 H14 L19 9 L14 18 H5 L0 9 Z" fill="#c4c6c8"/><path d="M7 4.5 L14 9 L7 13.5 Z" fill="#2d2f30"/></symbol>
<symbol id="i-bstatus" viewBox="0 0 19 18"><path d="M5 0.8 H18.2 V13.2 H5 Z" fill="none" stroke="#afb1b3" stroke-width="1.5"/><path d="M2.8 3.5 V15.5 H15.5" fill="none" stroke="#afb1b3" stroke-width="1.4"/><path d="M0.7 6 V17.5 H13" fill="none" stroke="#afb1b3" stroke-width="1.4"/></symbol>
<symbol id="i-bbranch" viewBox="0 0 13 21"><circle cx="2.6" cy="3" r="2.2" fill="#afb1b3"/><circle cx="2.6" cy="18" r="2.2" fill="#afb1b3"/><circle cx="10.4" cy="4" r="2.2" fill="#afb1b3"/><path d="M2.6 3 V18 M10.4 4 C10.4 10 2.6 9 2.6 14" fill="none" stroke="#afb1b3" stroke-width="2"/></symbol>
<symbol id="i-block" viewBox="0 0 17 17"><path d="M1.2 9 V5 A4 4 0 0 1 9 4.2" fill="none" stroke="#afb1b3" stroke-width="2"/><rect x="4.5" y="8.5" width="12.5" height="8.5" fill="#afb1b3"/></symbol>
<symbol id="i-bcloud" viewBox="0 0 25 21"><path d="M5.5 15.5 A5 5 0 0 1 5 5.6 A7 7 0 0 1 18.3 4.5 A5.2 5.2 0 0 1 22 11 L13 15.5 Z" fill="#afb1b3"/><circle cx="19" cy="16" r="5.6" fill="#3c3f41"/><path fill-rule="evenodd" d="M17.38 13.01 L17.86 12.80 L17.77 11.26 L20.23 11.26 L20.14 12.80 L20.62 13.01 L20.78 13.10 L21.21 13.41 L22.50 12.57 L23.72 14.69 L22.34 15.38 L22.40 15.91 L22.40 16.09 L22.34 16.62 L23.72 17.31 L22.50 19.43 L21.21 18.59 L20.78 18.90 L20.62 18.99 L20.14 19.20 L20.23 20.74 L17.77 20.74 L17.86 19.20 L17.38 18.99 L17.22 18.90 L16.79 18.59 L15.50 19.43 L14.28 17.31 L15.66 16.62 L15.60 16.09 L15.60 15.91 L15.66 15.38 L14.28 14.69 L15.50 12.57 L16.79 13.41 L17.22 13.10 Z M20.50 16.00 A1.50 1.50 0 1 0 17.50 16.00 A1.50 1.50 0 1 0 20.50 16.00 Z" fill="#afb1b3"/></symbol>
<symbol id="i-bwarn" viewBox="0 0 18 18"><circle cx="9" cy="9" r="8.6" fill="#5a5d5f"/><path d="M9 4 V10.3" stroke="#3c3f41" stroke-width="2.4"/><circle cx="9" cy="13.3" r="1.5" fill="#3c3f41"/></symbol>
<symbol id="i-col_pk2" viewBox="0 0 23 21"><rect x="1" y="0" width="8" height="16" fill="#3d97b8"/><path d="M10.5 0 H22.5 V4 H10.5 Z M11 7.5 H15 V9.3 H11 Z M11 11.5 H15 V13.3 H11 Z M11 15.5 H15.5 V17.3 H11 Z" fill="#9aa7b0"/><circle cx="3.6" cy="17" r="5.2" fill="#3c3f41"/><circle cx="3.6" cy="17" r="3.9" fill="#9aa7b0"/><g transform="translate(13.6,3.2) scale(0.78)"><path fill-rule="evenodd" d="M6 0 A6 6 0 0 1 8 11.6 V15.5 H12 V18.6 H8 V21 H4 V11.6 A6 6 0 0 1 6 0 Z M6 3.4 A2.2 2.2 0 0 0 6 7.8 A2.2 2.2 0 0 0 6 3.4 Z" fill="#e5a637"/></g></symbol>
</defs></svg>
<svg class="a" style="left:0;top:0" width="2312" height="8"><defs><linearGradient id="wg" x1="0" y1="0" x2="0" y2="1"><stop offset="0" stop-color="#eeeeee"/><stop offset="1" stop-color="#c6c6c6"/></linearGradient></defs><path d="M762 0 L904.5 0 L899 7 L768 7 Z" fill="url(#wg)"/><rect x="981" y="4" width="243" height="3" fill="#cfcfcf"/><rect x="1239" y="3.6" width="65.6" height="2.6" fill="#3a1adc"/><path d="M1697 7 L1727 0.5 L1758 0 L1761 7 Z" fill="#3a1adc"/></svg>
<div class="a" style="left:16px;top:7px;width:2283px;height:1508px;background:#3c3f41;border-radius:3px 3px 0 0"></div>
<div class="a" style="left:16px;top:7px;width:2283px;height:34px;background:#222d32;border-radius:3px 3px 0 0"></div>
<div class="t" style="left:1056.5px;top:6.6px;width:200px;text-align:center;height:34px;line-height:34px;font-family:'DejaVu Sans Condensed','DejaVu Sans',sans-serif;font-weight:bold;font-size:14.5px;color:#dfe6ea;transform:scaleX(0.935);transform-origin:50% 50%">keto – console</div>
<svg class="a" style="left:2200px;top:10px" width="96" height="28"><rect x="9" y="17" width="10" height="2.3" fill="#dde3e7"/><rect x="44" y="10" width="8" height="8" fill="none" stroke="#dde3e7" stroke-width="2"/><path d="M77.5 9.5 L86.5 18.5 M86.5 9.5 L77.5 18.5" stroke="#dde3e7" stroke-width="2" fill="none"/></svg>
<div class="t " style="left:23.2px;top:39px;height:32px;line-height:32px;"><u>F</u>ile</div>
<div class="t " style="left:67.7px;top:39px;height:32px;line-height:32px;"><u>E</u>dit</div>
<div class="t " style="left:117px;top:39px;height:32px;line-height:32px;"><u>V</u>iew</div>
<div class="t " style="left:174px;top:39px;height:32px;line-height:32px;"><u>N</u>avigate</div>
<div class="t " style="left:269px;top:39px;height:32px;line-height:32px;"><u>C</u>ode</div>
<div class="t " style="left:330px;top:39px;height:32px;line-height:32px;"><u>R</u>efactor</div>
<div class="t " style="left:421px;top:39px;height:32px;line-height:32px;">R<u>u</u>n</div>
<div class="t " style="left:470px;top:39px;height:32px;line-height:32px;"><u>T</u>ools</div>
<div class="t " style="left:531px;top:39px;height:32px;line-height:32px;"><u>G</u>it</div>
<div class="t " style="left:572px;top:39px;height:32px;line-height:32px;"><u>W</u>indow</div>
<div class="t " style="left:657px;top:39px;height:32px;line-height:32px;"><u>H</u>elp</div>
<div class="a" style="left:16px;top:113px;width:2283px;height:2px;background:#555555;"></div>
<div class="a" style="left:141px;top:76px;width:1px;height:30px;background:#555555;"></div>
<div class="a" style="left:230px;top:76px;width:1px;height:30px;background:#555555;"></div>
<div class="a" style="left:293px;top:76px;width:1px;height:30px;background:#555555;"></div>
<div class="a" style="left:1019px;top:76px;width:1px;height:30px;background:#555555;"></div>
<div class="a" style="left:1313px;top:76px;width:1px;height:30px;background:#555555;"></div>
<svg class="a" style="left:28.7px;top:83px" width="21.3" height="15.6" ><use href="#i-folderopen"/></svg>
<svg class="a" style="left:67.9px;top:82px" width="18.2" height="18.1" ><use href="#i-save"/></svg>
<svg class="a" style="left:106.6px;top:82.3px" width="18.8" height="17.8" ><use href="#i-refresh"/></svg>
<svg class="a" style="left:155.5px;top:84.2px" width="19.5" height="13.6" ><use href="#i-back"/></svg>
<svg class="a" style="left:196px;top:84.2px" width="19.5" height="13.6" ><use href="#i-fwd"/></svg>
<svg class="a" style="left:243px;top:82px" width="21.6" height="17.6" ><use href="#i-users"/></svg>
<svg class="a" style="left:269px;top:90px" width="12" height="6" ><use href="#i-tridown"/></svg>
<div class="a" style="left:309px;top:75px;width:446px;height:33px;border:1px solid #5e6163;border-radius:5px"></div>
<svg class="a" style="left:326px;top:80px" width="19.5" height="21.4" opacity="0.45"><use href="#i-gopher_run"/></svg>
<div class="t " style="left:352px;top:75px;height:32px;line-height:32px;">Test in github.com/ory/keto/internal/e2e</div>
<svg class="a" style="left:727px;top:88px" width="13" height="7" ><use href="#i-tridown"/></svg>
<svg class="a" style="left:776.1px;top:82px" width="14.7" height="17.7" ><use href="#i-run"/></svg>
<svg class="a" style="left:811.8px;top:81px" width="18.3" height="20.8" ><use href="#i-bug"/></svg>
<svg class="a" style="left:850.9px;top:81px" width="21.5" height="22.2" ><use href="#i-bugrun"/></svg>
<svg class="a" style="left:888px;top:82px" width="23.2" height="20.7" ><use href="#i-coverage"/></svg>
<svg class="a" style="left:923.6px;top:80.4px" width="23.2" height="22.3" ><use href="#i-profile"/></svg>
<svg class="a" style="left:957px;top:89px" width="12" height="6" ><use href="#i-tridown"/></svg>
<svg class="a" style="left:986.2px;top:83.5px" width="15.3" height="15.1" ><use href="#i-stopgray"/></svg>
<div class="t " style="left:1034px;top:75px;height:32px;line-height:32px;">Git:</div>
<svg class="a" style="left:1084.6px;top:82px" width="17.6" height="16.8" ><use href="#i-gitupdate"/></svg>
<svg class="a" style="left:1122.8px;top:82.2px" width="20.6" height="16" ><use href="#i-gitcommit"/></svg>
<svg class="a" style="left:1161.8px;top:83px" width="17.6" height="16.8" ><use href="#i-gitpush"/></svg>
<svg class="a" style="left:1199.3px;top:81px" width="21.6" height="20.2" ><use href="#i-gitmerge"/></svg>
<svg class="a" style="left:1238.2px;top:80px" width="21.4" height="21.4" ><use href="#i-historyoff"/></svg>
<svg class="a" style="left:1278px;top:80px" width="21" height="22" ><use href="#i-rollback"/></svg>
<svg class="a" style="left:2229px;top:80px" width="22" height="22" ><use href="#i-search"/></svg>
<svg class="a" style="left:2266px;top:79px" width="25" height="25" ><use href="#i-updatebadge"/></svg>
<div class="t " style="left:35.7px;top:116px;height:32px;line-height:32px;">Database Consoles</div>
<div class="t " style="left:233px;top:116px;height:32px;line-height:32px;">TestNetwork.sqlite</div>
<div class="t " style="left:451px;top:116px;height:32px;line-height:32px;">console</div>
<svg class="a" style="left:211px;top:121px" width="10" height="22" ><use href="#i-navsep"/></svg>
<svg class="a" style="left:405px;top:121px" width="10" height="22" ><use href="#i-navsep"/></svg>
<svg class="a" style="left:424.8px;top:121.5px" width="20" height="22.5" ><use href="#i-sqlite"/></svg>
<div class="a" style="left:16px;top:148.8px;width:2283px;height:1.6px;background:#2f3133;"></div>
<div class="a" style="left:16px;top:150px;width:30px;height:1303px;background:#3c3f41;"></div>
<div class="a" style="left:46px;top:150px;width:1px;height:1303px;background:#323232;"></div>
<div class="rot" style="left:21.6px;top:219px;font-size:16.3px;color:#bbbbbb;transform:rotate(-90deg)">Project</div>
<svg class="a" style="left:22px;top:227px" width="17" height="14" ><use href="#i-sfolder"/></svg>
<div class="rot" style="left:21.6px;top:351.8px;font-size:16.3px;color:#bbbbbb;transform:rotate(-90deg)">Structure</div>
<svg class="a" style="left:24px;top:360px" width="14" height="14" ><use href="#i-sstructure"/></svg>
<div class="rot" style="left:21.6px;top:474.4px;font-size:16.3px;color:#bbbbbb;transform:rotate(-90deg)">Commit</div>
<svg class="a" style="left:21px;top:482px" width="20" height="12" ><use href="#i-scommit"/></svg>
<div class="rot" style="left:21.6px;top:642.9px;font-size:16.3px;color:#bbbbbb;transform:rotate(-90deg)">Pull Requests</div>
<svg class="a" style="left:24px;top:649px" width="15" height="17" ><use href="#i-spull"/></svg>
<div class="rot" style="left:21.6px;top:1322px;font-size:16.3px;color:#bbbbbb;transform:rotate(-90deg)">Favorites</div>
<svg class="a" style="left:21px;top:1326px" width="19" height="18" ><use href="#i-sstar"/></svg>
<div class="rot" style="left:21.6px;top:1412.5px;font-size:16.3px;color:#bbbbbb;transform:rotate(-90deg)">npm</div>
<svg class="a" style="left:22px;top:1418px" width="17" height="17" ><use href="#i-snpm"/></svg>
<div class="a" style="left:2268px;top:150px;width:31px;height:1303px;background:#3c3f41;"></div>
<div class="a" style="left:2268px;top:150px;width:1px;height:1303px;background:#323232;"></div>
<div class="a" style="left:2269px;top:150px;width:30px;height:135px;background:#2d2f30;"></div>
<div class="rot" style="left:2293.2px;top:192.1px;font-size:16.3px;color:#dcdcdc;transform:rotate(90deg)">Database</div>
<svg class="a" style="left:2274px;top:167px" width="17" height="18" ><use href="#i-sdb"/></svg>
<svg class="a" style="left:2275.5px;top:1372px" width="15" height="12.5" ><use href="#i-smake"/></svg>
<div class="rot" style="left:2293.5px;top:1394px;font-size:16.3px;color:#bbbbbb;transform:rotate(90deg)">make</div>
<div class="a" style="left:47px;top:150.4px;width:955px;height:39.6px;background:#3c3f41;"></div>
<div class="a" style="left:47px;top:151px;width:136px;height:39px;background:#4e5254;"></div>
<svg class="a" style="left:57.3px;top:159.7px" width="20" height="22.5" ><use href="#i-sqlite"/></svg>
<div class="t " style="left:84.3px;top:154.8px;height:32px;line-height:32px;color:#bbbbbb">console</div>
<svg class="a" style="left:163.5px;top:165.5px" width="11" height="11" ><use href="#i-closex"/></svg>
<div class="a" style="left:183px;top:151px;width:172px;height:39px;background:#44423f;"></div>
<svg class="a" style="left:193px;top:160px" width="20.4" height="23" ><use href="#i-gopher_lock"/></svg>
<div class="t " style="left:218.4px;top:154.8px;height:32px;line-height:32px;color:#bbbbbb">migrator.go</div>
<svg class="a" style="left:335.5px;top:165.5px" width="11" height="11" ><use href="#i-closex"/></svg>
<div class="a" style="left:355px;top:151px;width:174px;height:39px;background:#424745;"></div>
<svg class="a" style="left:365px;top:160px" width="20" height="22" ><use href="#i-gopher_run"/></svg>
<div class="t " style="left:390.3px;top:154.8px;height:32px;line-height:32px;color:#bbbbbb">root_test.go</div>
<svg class="a" style="left:509.5px;top:165.5px" width="11" height="11" ><use href="#i-closex"/></svg>
<div class="a" style="left:529px;top:151px;width:202px;height:39px;background:#3c3f41;"></div>
<svg class="a" style="left:539px;top:160px" width="16" height="22" ><use href="#i-gopher"/></svg>
<div class="t " style="left:564.3px;top:154.8px;height:32px;line-height:32px;color:#6296c4">test_helpers.go</div>
<svg class="a" style="left:713.5px;top:165.5px" width="11" height="11" ><use href="#i-closex"/></svg>
<div class="a" style="left:731px;top:151px;width:158px;height:39px;background:#44423f;"></div>
<svg class="a" style="left:742.7px;top:160px" width="20.4" height="23" ><use href="#i-gopher_lock"/></svg>
<div class="t " style="left:768.7px;top:154.8px;height:32px;line-height:32px;color:#bbbbbb">testing.go</div>
<svg class="a" style="left:869.2px;top:165.5px" width="11" height="11" ><use href="#i-closex"/></svg>
<div class="a" style="left:889px;top:151px;width:113px;height:39px;background:#3c3f41;"></div>
<svg class="a" style="left:898.9px;top:160px" width="16" height="22" ><use href="#i-gopher"/></svg>
<div class="t" style="left:924.4px;top:154.8px;width:40px;overflow:hidden;color:#6296c4;-webkit-mask-image:linear-gradient(90deg,#000 72%,transparent 112%);mask-image:linear-gradient(90deg,#000 72%,transparent 112%)">prov</div>
<svg class="a" style="left:975px;top:165px" width="14" height="8.5" ><use href="#i-chevdown_l"/></svg>
<div class="a" style="left:47px;top:190px;width:955px;height:1px;background:#323232;"></div>
<div class="a" style="left:47px;top:151px;width:14px;height:35px;background:linear-gradient(90deg,#3c3f41,#4e5254)"></div>
<div class="a" style="left:47px;top:186px;width:136px;height:5px;background:#747a80;"></div>
<div class="a" style="left:47px;top:191px;width:955px;height:47px;background:#3c3f41;"></div>
<div class="a" style="left:94px;top:199px;width:1px;height:32px;background:#555555;"></div>
<div class="a" style="left:222px;top:199px;width:1px;height:32px;background:#555555;"></div>
<div class="a" style="left:423px;top:199px;width:1px;height:32px;background:#555555;"></div>
<div class="a" style="left:473px;top:199px;width:1px;height:32px;background:#555555;"></div>
<svg class="a" style="left:63px;top:205px" width="15" height="18" ><use href="#i-run"/></svg>
<svg class="a" style="left:108.2px;top:203.1px" width="21.4" height="21.4" ><use href="#i-clock"/></svg>
<div class="a" style="left:147.2px;top:203.1px;width:21.3px;height:21.3px;border-radius:50%;background:#b5853a"></div>
<div class="t " style="left:147.2px;top:201.5px;height:22px;line-height:22px;width:21.3px;text-align:center;color:#3a3428;font-size:16px">p</div>
<svg class="a" style="left:187px;top:203.5px" width="21" height="21" ><use href="#i-wrench"/></svg>
<div class="t " style="left:245.4px;top:198.5px;height:32px;line-height:32px;font-size:15px">Tx: Auto</div>
<svg class="a" style="left:315px;top:211.5px" width="11" height="7" ><use href="#i-chev"/></svg>
<svg class="a" style="left:350px;top:206px" width="20" height="16" ><use href="#i-checkoff"/></svg>
<svg class="a" style="left:389px;top:204.5px" width="18" height="19" ><use href="#i-undooff"/></svg>
<svg class="a" style="left:440px;top:206.5px" width="15.5" height="15" ><use href="#i-stopgray"/></svg>
<svg class="a" style="left:488.5px;top:205px" width="20" height="18" ><use href="#i-tableview"/></svg>
<svg class="a" style="left:776px;top:202.5px" width="22" height="19.5" ><use href="#i-schema"/></svg>
<div class="t " style="left:802.2px;top:198.5px;height:32px;line-height:32px;font-size:15px">main</div>
<svg class="a" style="left:847px;top:211.5px" width="11" height="7" ><use href="#i-chev"/></svg>
<svg class="a" style="left:884.9px;top:205.5px" width="22.2" height="15.3" ><use href="#i-session"/></svg>
<div class="a" style="left:901px;top:218px;width:8.4px;height:8.4px;border-radius:50%;background:#0be50b;border:1.1px solid #3c3f41"></div>
<div class="t " style="left:911.4px;top:198.5px;height:32px;line-height:32px;font-size:15px">console</div>
<svg class="a" style="left:975px;top:211.5px" width="11" height="7" ><use href="#i-chev"/></svg>
<div class="a" style="left:47px;top:238px;width:74px;height:620px;background:#313335;"></div>
<div class="a" style="left:121px;top:238px;width:1px;height:620px;background:#555555;"></div>
<div class="a" style="left:122px;top:238px;width:879px;height:620px;background:#2b2b2b;"></div>
<div class="a" style="left:47px;top:238px;width:74px;height:29px;background:#323232;"></div>
<div class="a" style="left:122px;top:238px;width:879px;height:29px;background:#323232;"></div>
<div class="a" style="left:47px;top:858px;width:954px;height:30px;background:#313335;"></div>
<div class="a" style="left:47px;top:858px;width:954px;height:1px;background:#3a3c3e;"></div>
<div class="a" style="left:129px;top:240px;width:293px;height:27px;border:1px solid #0c6e12"></div>
<div class="t mono" style="left:129.2px;top:239.3px;height:29px;line-height:29px;color:#a9b7c6"><span style="color:#cc7832">select</span> <span style="color:#ffc66d">*</span> <span style="color:#cc7832">from</span> keto_networks<span style="color:#cc7832">;</span></div>
<div class="t mono" style="left:55px;top:239.3px;height:29px;line-height:29px;color:#a4a3a3">1</div>
<svg class="a" style="left:77.5px;top:246px" width="20" height="14.5" ><use href="#i-gcheck"/></svg>
<div class="a" style="left:965px;top:243px;width:33px;height:30px;background:#2b2b2b;border-radius:5px 5px 0 0"></div>
<svg class="a" style="left:972px;top:251.5px" width="18" height="13.5" ><use href="#i-gcheck2"/></svg>
<div class="a" style="left:1001px;top:150px;width:1px;height:738px;background:#323232;"></div>
<div class="a" style="left:1002px;top:150px;width:1265px;height:738px;background:#3c3f41;"></div>
<div class="a" style="left:1002px;top:190px;width:1265px;height:1px;background:#323232;"></div>
<div class="a" style="left:1002px;top:234px;width:1265px;height:1px;background:#323232;"></div>
<div class="t " style="left:1009px;top:154px;height:32px;line-height:32px;">Database</div>
<svg class="a" style="left:2070.1px;top:159px" width="21.8" height="21.8" ><use href="#i-target"/></svg>
<svg class="a" style="left:2111px;top:159.1px" width="18" height="21.6" ><use href="#i-expandall"/></svg>
<svg class="a" style="left:2150px;top:160.5px" width="18" height="19" ><use href="#i-collapseall"/></svg>
<div class="a" style="left:2184px;top:155px;width:1px;height:30px;background:#555555;"></div>
<svg class="a" style="left:2199.5px;top:159.9px" width="19.2" height="20.2" ><use href="#i-gear"/></svg>
<svg class="a" style="left:2238.9px;top:168.4px" width="18.2" height="3.6" ><use href="#i-minus"/></svg>
<svg class="a" style="left:1016px;top:204px" width="16" height="16" ><use href="#i-plus"/></svg>
<svg class="a" style="left:1029px;top:221px" width="9" height="5.5" ><use href="#i-minitri"/></svg>
<svg class="a" style="left:1054px;top:201.4px" width="18" height="19.6" ><use href="#i-copyoff"/></svg>
<div class="a" style="left:1088px;top:197px;width:1px;height:30px;background:#555555;"></div>
<div class="a" style="left:1216px;top:197px;width:1px;height:30px;background:#555555;"></div>
<div class="a" style="left:1383px;top:197px;width:1px;height:30px;background:#555555;"></div>
<svg class="a" style="left:1103.7px;top:202.8px" width="18.6" height="18.2" ><use href="#i-refresh2"/></svg>
<svg class="a" style="left:1141px;top:201px" width="23.5" height="22.5" ><use href="#i-dbwrench"/></svg>
<svg class="a" style="left:1183.4px;top:204.3px" width="15.6" height="15.5" ><use href="#i-stopred"/></svg>
<svg class="a" style="left:1230px;top:203px" width="22" height="18" ><use href="#i-table"/></svg>
<svg class="a" style="left:1269px;top:201.3px" width="22" height="21.5" ><use href="#i-pencil"/></svg>
<svg class="a" style="left:1308px;top:201px" width="22" height="22" ><use href="#i-bluearrows"/></svg>
<svg class="a" style="left:1347px;top:203px" width="21.6" height="20" ><use href="#i-ql"/></svg>
<svg class="a" style="left:1398.5px;top:203px" width="18.6" height="18" ><use href="#i-filter"/></svg>
<div class="a" style="left:1002px;top:427px;width:1266px;height:32px;background:#0d293e;"></div>
<div class="a" style="left:1002px;top:235px;width:1251px;height:653px;overflow:hidden;will-change:transform">
<svg class="a" style="left:9px;top:11.8px" width="13" height="8" ><use href="#i-tchevd"/></svg>
<svg class="a" style="left:38px;top:4.5px" width="22" height="24.5" ><use href="#i-sqlite_dot"/></svg>
<div class="t " style="left:69px;top:0px;height:32px;line-height:32px;">TestNetwork.sqlite<span style="display:inline-block;vertical-align:top;margin:3px 0 0 10px;height:27px;line-height:25px;width:20px;text-align:center;border:1px solid #4d5052;border-radius:4px;font-size:16.5px;color:#7f7f7f">1</span></div>
<svg class="a" style="left:37px;top:43.8px" width="13" height="8" ><use href="#i-tchevd"/></svg>
<svg class="a" style="left:64px;top:37.8px" width="22" height="19.5" ><use href="#i-schema"/></svg>
<div class="t " style="left:97px;top:32px;height:32px;line-height:32px;">main</div>
<svg class="a" style="left:65px;top:75.8px" width="13" height="8" ><use href="#i-tchevd"/></svg>
<svg class="a" style="left:92px;top:71px" width="22" height="17" ><use href="#i-tfolder"/></svg>
<div class="t " style="left:125px;top:64px;height:32px;line-height:32px;">tables<span style="margin-left:9px;font-size:16.4px;color:#7f7f7f">5</span></div>
<svg class="a" style="left:94.5px;top:105.8px" width="8" height="13" ><use href="#i-tchevr"/></svg>
<svg class="a" style="left:120px;top:103px" width="22" height="18" ><use href="#i-table"/></svg>
<div class="t " style="left:153px;top:96px;height:32px;line-height:32px;">keto_namespace</div>
<svg class="a" style="left:93px;top:139.8px" width="13" height="8" ><use href="#i-tchevd"/></svg>
<svg class="a" style="left:120px;top:135px" width="22" height="18" ><use href="#i-table"/></svg>
<div class="t " style="left:153px;top:128px;height:32px;line-height:32px;">keto_networks</div>
<svg class="a" style="left:147px;top:167px" width="23" height="21" ><use href="#i-col_idx"/></svg>
<div class="t " style="left:181px;top:160px;height:32px;line-height:32px;">limiter<span style="margin-left:14px;font-size:16.4px;color:#7f7f7f">INTEGER = 0</span></div>
<svg class="a" style="left:147px;top:199px" width="23" height="21" ><use href="#i-col_pk"/></svg>
<div class="t " style="left:181px;top:192px;height:32px;line-height:32px;">network_id<span style="margin-left:14px;font-size:16.4px;color:#7f7f7f">UUID</span></div>
<svg class="a" style="left:147px;top:231px" width="23" height="21" ><use href="#i-col_nn"/></svg>
<div class="t " style="left:181px;top:224px;height:32px;line-height:32px;">created_at<span style="margin-left:13.8px;font-size:16.4px;color:#7f7f7f">timestamp</span></div>
<svg class="a" style="left:147px;top:263px" width="23" height="21" ><use href="#i-col_nn"/></svg>
<div class="t " style="left:181px;top:256px;height:32px;line-height:32px;">updated_at<span style="margin-left:13.8px;font-size:16.4px;color:#7f7f7f">timestamp</span></div>
<svg class="a" style="left:151.5px;top:293.3px" width="12.5" height="21" ><use href="#i-key"/></svg>
<div class="t " style="left:181px;top:288px;height:32px;line-height:32px;"><span style="font-size:16.4px;color:#7f7f7f">key #1</span><span style="margin-left:15.4px;font-size:16.4px;color:#7f7f7f">(network_id)</span></div>
<svg class="a" style="left:151.5px;top:325.3px" width="12.5" height="21" ><use href="#i-keyo"/></svg>
<div class="t " style="left:181px;top:320px;height:32px;line-height:32px;"><span style="font-size:16.4px;color:#7f7f7f">key #2</span><span style="margin-left:15.4px;font-size:16.4px;color:#7f7f7f">(limiter)</span></div>
<svg class="a" style="left:152.7px;top:357.3px" width="18.6" height="22.4" ><use href="#i-index"/></svg>
<div class="t " style="left:181px;top:352px;height:32px;line-height:32px;">sqlite_autoindex_keto_networks_1<span style="margin-left:14.2px;font-size:16.4px;color:#7f7f7f">(limiter) UNIQUE</span></div>
<svg class="a" style="left:152.7px;top:389.3px" width="18.6" height="22.4" ><use href="#i-index"/></svg>
<div class="t " style="left:181px;top:384px;height:32px;line-height:32px;">sqlite_autoindex_keto_networks_2<span style="margin-left:14.2px;font-size:16.4px;color:#7f7f7f">(network_id) UNIQUE</span></div>
<svg class="a" style="left:150px;top:423px" width="21" height="19" ><use href="#i-chk"/></svg>
<div class="t " style="left:181px;top:416px;height:32px;line-height:32px;">chk_keto_networks_limit<span style="margin-left:13.6px;font-size:16.4px;color:#7f7f7f">(limiter = 0)</span></div>
<svg class="a" style="left:94.5px;top:457.8px" width="8" height="13" ><use href="#i-tchevr"/></svg>
<svg class="a" style="left:120px;top:455px" width="22" height="18" ><use href="#i-table"/></svg>
<div class="t " style="left:153px;top:448px;height:32px;line-height:32px;">keto_relation_tuples</div>
<svg class="a" style="left:94.5px;top:489.8px" width="8" height="13" ><use href="#i-tchevr"/></svg>
<svg class="a" style="left:120px;top:487px" width="22" height="18" ><use href="#i-table"/></svg>
<div class="t " style="left:153px;top:480px;height:32px;line-height:32px;">schema_migration</div>
<svg class="a" style="left:93px;top:523.8px" width="13" height="8" ><use href="#i-tchevd"/></svg>
<svg class="a" style="left:120px;top:519px" width="22" height="18" ><use href="#i-table"/></svg>
<div class="t " style="left:153px;top:512px;height:32px;line-height:32px;">sqlite_master</div>
<svg class="a" style="left:147px;top:551px" width="23" height="21" ><use href="#i-col"/></svg>
<div class="t " style="left:181px;top:544px;height:32px;line-height:32px;">type<span style="margin-left:14px;font-size:16.4px;color:#7f7f7f">text</span></div>
<svg class="a" style="left:147px;top:583px" width="23" height="21" ><use href="#i-col"/></svg>
<div class="t " style="left:181px;top:576px;height:32px;line-height:32px;">name<span style="margin-left:14px;font-size:16.4px;color:#7f7f7f">text</span></div>
<svg class="a" style="left:147px;top:615px" width="23" height="21" ><use href="#i-col"/></svg>
<div class="t " style="left:181px;top:608px;height:32px;line-height:32px;">tbl_name<span style="margin-left:14px;font-size:16.4px;color:#7f7f7f">text</span></div>
<svg class="a" style="left:147px;top:647px" width="23" height="21" ><use href="#i-col"/></svg>
<div class="t " style="left:181px;top:640px;height:32px;line-height:32px;">rootpage<span style="margin-left:14px;font-size:16.4px;color:#7f7f7f">int</span></div>
</div>
<div class="a" style="left:2254px;top:236px;width:13px;height:508px;background:rgba(166,166,166,0.28);"></div>
<div class="a" style="left:47px;top:888px;width:2221px;height:40px;background:#3b4754;"></div>
<div class="t " style="left:54px;top:892px;height:32px;line-height:32px;">Services</div>
<svg class="a" style="left:2148px;top:897px" width="22" height="22" ><use href="#i-target"/></svg>
<div class="a" style="left:2184px;top:893px;width:1px;height:30px;background:#4f5b66;"></div>
<svg class="a" style="left:2199.5px;top:897.9px" width="19.2" height="20.2" ><use href="#i-gear"/></svg>
<svg class="a" style="left:2238.9px;top:906.4px" width="18.2" height="3.6" ><use href="#i-minus"/></svg>
<div class="a" style="left:47px;top:928px;width:2221px;height:1px;background:#323232;"></div>
<div class="a" style="left:47px;top:929px;width:43px;height:524px;background:#3c3f41;"></div>
<div class="a" style="left:90px;top:929px;width:1px;height:524px;background:#323232;"></div>
<div class="t " style="left:58px;top:934.5px;height:32px;line-height:32px;font-size:17.3px">Tx</div>
<svg class="a" style="left:73.2px;top:960.5px" width="9" height="5" ><use href="#i-minitri"/></svg>
<svg class="a" style="left:59px;top:981px" width="20" height="16.5" ><use href="#i-checkoff"/></svg>
<svg class="a" style="left:58.7px;top:1019.5px" width="18" height="18.5" ><use href="#i-undooff2"/></svg>
<div class="a" style="left:53px;top:1054px;width:30px;height:1px;background:#555555;"></div>
<svg class="a" style="left:60.3px;top:1071.5px" width="15.4" height="14.8" ><use href="#i-stopgray"/></svg>
<div class="a" style="left:53px;top:1104px;width:30px;height:1px;background:#555555;"></div>
<svg class="a" style="left:59.1px;top:1121.5px" width="18" height="15" ><use href="#i-layout"/></svg>
<div class="a" style="left:91px;top:929px;width:653px;height:524px;background:#3c3f41;"></div>
<div class="a" style="left:91px;top:971px;width:653px;height:1px;background:#323232;"></div>
<svg class="a" style="left:101px;top:938.1px" width="18" height="21.6" ><use href="#i-expandall"/></svg>
<svg class="a" style="left:140.2px;top:940px" width="18" height="18.6" ><use href="#i-collapseall"/></svg>
<div class="a" style="left:174px;top:934px;width:1px;height:30px;background:#555555;"></div>
<svg class="a" style="left:191.1px;top:941.7px" width="15.6" height="14.8" ><use href="#i-groupby"/></svg>
<svg class="a" style="left:204px;top:958.5px" width="9" height="5" ><use href="#i-minitri"/></svg>
<svg class="a" style="left:226.2px;top:938.7px" width="24" height="19.5" ><use href="#i-newtab"/></svg>
<div class="a" style="left:263px;top:934px;width:1px;height:30px;background:#555555;"></div>
<svg class="a" style="left:280.3px;top:941.7px" width="15.4" height="15.4" ><use href="#i-plus"/></svg>
<svg class="a" style="left:293px;top:958.5px" width="9" height="5" ><use href="#i-minitri"/></svg>
<svg class="a" style="left:101px;top:981px" width="8" height="13" ><use href="#i-tchevr"/></svg>
<svg class="a" style="left:127.3px;top:977.2px" width="21.4" height="21.5" ><use href="#i-k8s"/></svg>
<div class="t " style="left:155.6px;top:972px;height:32px;line-height:32px;">kind-watcherx-integration-test <span style="color:#7f7f7f">[default]</span></div>
<svg class="a" style="left:99.9px;top:1015.6px" width="13" height="8" ><use href="#i-tchevd"/></svg>
<svg class="a" style="left:129px;top:1008.5px" width="20" height="22.5" ><use href="#i-sqlite"/></svg>
<div class="t " style="left:155.6px;top:1004px;height:32px;line-height:32px;">TestNetwork.sqlite</div>
<svg class="a" style="left:127.8px;top:1047.6px" width="13" height="8" ><use href="#i-tchevd"/></svg>
<svg class="a" style="left:155px;top:1044.3px" width="22.2" height="15.3" ><use href="#i-session"/></svg>
<div class="a" style="left:171.1px;top:1056.8px;width:8.4px;height:8.4px;border-radius:50%;background:#0be50b;border:1.1px solid #3c3f41"></div>
<div class="t " style="left:183.5px;top:1036px;height:32px;line-height:32px;">console<span style="margin-left:8.7px;color:#7f7f7f">238 ms</span></div>
<div class="a" style="left:91px;top:1068px;width:653px;height:32px;background:#2f65ca;"></div>
<svg class="a" style="left:185px;top:1072.5px" width="20" height="22.5" opacity="0.93"><use href="#i-sqlite"/></svg>
<div class="t " style="left:211px;top:1068px;height:32px;line-height:32px;color:#d4d4d4">console<span style="margin-left:8.4px">238 ms</span></div>
<div class="a" style="left:744px;top:929px;width:1px;height:524px;background:#323232;"></div>
<div class="a" style="left:745px;top:929px;width:1523px;height:42px;background:#3c3f41;"></div>
<div class="a" style="left:745px;top:970px;width:1523px;height:1px;background:#323232;"></div>
<svg class="a" style="left:766px;top:944.2px" width="18" height="15.4" ><use href="#i-outputic"/></svg>
<div class="t " style="left:792.7px;top:936.8px;height:32px;line-height:32px;font-size:16.4px">Output</div>
<svg class="a" style="left:861.2px;top:946.4px" width="10" height="10" ><use href="#i-closex"/></svg>
<svg class="a" style="left:907.1px;top:943.3px" width="21.8" height="17.2" ><use href="#i-table"/></svg>
<div class="t " style="left:935.8px;top:936.8px;height:32px;line-height:32px;font-size:16.4px">main.keto_networks</div>
<svg class="a" style="left:1112.8px;top:946.4px" width="10" height="10" ><use href="#i-closex"/></svg>
<div class="a" style="left:888px;top:969px;width:254px;height:3px;background:#747a80;"></div>
<div class="a" style="left:745px;top:972px;width:1523px;height:44px;background:#3c3f41;"></div>
<svg class="a" style="left:758.2px;top:986.7px" width="14.5" height="15" ><use href="#i-firstoff"/></svg>
<svg class="a" style="left:799px;top:986.7px" width="9" height="15" ><use href="#i-prevoff"/></svg>
<div class="t " style="left:833.6px;top:978.5px;height:32px;line-height:32px;font-size:15px">0 rows</div>
<svg class="a" style="left:890px;top:992px" width="11" height="7" ><use href="#i-chev"/></svg>
<svg class="a" style="left:924.5px;top:986.7px" width="9" height="15" ><use href="#i-nextoff"/></svg>
<svg class="a" style="left:959.8px;top:986.7px" width="14.5" height="15" ><use href="#i-lastoff"/></svg>
<div class="a" style="left:993px;top:979px;width:1px;height:33px;background:#555555;"></div>
<div class="a" style="left:1082px;top:979px;width:1px;height:33px;background:#555555;"></div>
<div class="a" style="left:1288px;top:979px;width:1px;height:33px;background:#555555;"></div>
<div class="a" style="left:1411px;top:979px;width:1px;height:33px;background:#555555;"></div>
<div class="a" style="left:1480px;top:979px;width:1px;height:33px;background:#555555;"></div>
<div class="a" style="left:2056px;top:979px;width:1px;height:33px;background:#555555;"></div>
<div class="a" style="left:2184px;top:979px;width:1px;height:33px;background:#555555;"></div>
<svg class="a" style="left:1008.8px;top:985px" width="18.6" height="18.2" ><use href="#i-refresh2"/></svg>
<svg class="a" style="left:1049.4px;top:986.9px" width="15.2" height="14.6" ><use href="#i-stopgray"/></svg>
<svg class="a" style="left:1099.3px;top:986.5px" width="15.4" height="15.4" ><use href="#i-plus"/></svg>
<svg class="a" style="left:1138.2px;top:992.7px" width="15.6" height="2.8" ><use href="#i-minusoff"/></svg>
<svg class="a" style="left:1176.5px;top:984.4px" width="19" height="18.5" ><use href="#i-revertoff"/></svg>
<svg class="a" style="left:1213.9px;top:986.3px" width="21.6" height="19.7" ><use href="#i-eyeupoff"/></svg>
<svg class="a" style="left:1254.4px;top:985.5px" width="17.3" height="17.3" ><use href="#i-upoff"/></svg>
<div class="t " style="left:1311.2px;top:978.5px;height:32px;line-height:32px;font-size:15px">Tx: Auto</div>
<svg class="a" style="left:1381px;top:992px" width="11" height="7" ><use href="#i-chev"/></svg>
<div class="t " style="left:1430.6px;top:978.5px;height:32px;line-height:32px;font-size:15px">DDL</div>
<svg class="a" style="left:1493.5px;top:983px" width="23" height="22.5" ><use href="#i-pin"/></svg>
<div class="t " style="left:1987.8px;top:978.5px;height:32px;line-height:32px;font-size:15px">CSV</div>
<svg class="a" style="left:2026px;top:992px" width="11" height="7" ><use href="#i-chev"/></svg>
<svg class="a" style="left:2071.5px;top:985px" width="18" height="18.5" ><use href="#i-downloadoff"/></svg>
<svg class="a" style="left:2110.5px;top:985px" width="18" height="18.5" ><use href="#i-upload"/></svg>
<svg class="a" style="left:2148px;top:983.5px" width="22" height="22" ><use href="#i-bluearrows"/></svg>
<svg class="a" style="left:2163.5px;top:1002.5px" width="9" height="5" ><use href="#i-minitri"/></svg>
<svg class="a" style="left:2198.5px;top:987.5px" width="22" height="14" ><use href="#i-eye"/></svg>
<svg class="a" style="left:2213.5px;top:1002.5px" width="9" height="5" ><use href="#i-minitri"/></svg>
<svg class="a" style="left:2238.5px;top:984px" width="20" height="21" ><use href="#i-gear"/></svg>
<svg class="a" style="left:2252.5px;top:1002.5px" width="9" height="5" ><use href="#i-minitri"/></svg>
<div class="a" style="left:745px;top:1016px;width:1523px;height:437px;background:#2b2b2b;"></div>
<div class="a" style="left:745px;top:1015px;width:1523px;height:1.5px;background:#313335;"></div>
<div class="a" style="left:745px;top:1016.5px;width:868px;height:38.5px;background:#3d3f41;"></div>
<div class="a" style="left:745px;top:1016.5px;width:866.7px;height:36.8px;background:#353637;"></div>
<div class="a" style="left:745px;top:1016.5px;width:197px;height:36.8px;background:#3a3a3a;"></div>
<div class="a" style="left:944px;top:1016.5px;width:221px;height:36.8px;background:#3a3a3a;"></div>
<div class="a" style="left:1167px;top:1016.5px;width:221px;height:36.8px;background:#3a3a3a;"></div>
<div class="a" style="left:1390px;top:1016.5px;width:221.7px;height:36.8px;background:#3a3a3a;"></div>
<svg class="a" style="left:803px;top:1025px" width="23" height="21" ><use href="#i-col_idx"/></svg>
<div class="t mono" style="left:831.7px;top:1018.3px;height:32px;line-height:32px;color:#a9b7c6">limiter</div>
<svg class="a" style="left:921.3px;top:1028px" width="8.1" height="12.1" ><use href="#i-sortud"/></svg>
<svg class="a" style="left:995px;top:1025px" width="23" height="21" ><use href="#i-col_pk2"/></svg>
<div class="t mono" style="left:1022.5px;top:1018.3px;height:32px;line-height:32px;color:#a9b7c6">network_id</div>
<svg class="a" style="left:1144px;top:1028px" width="8.1" height="12.1" ><use href="#i-sortud"/></svg>
<svg class="a" style="left:1172px;top:1025px" width="23" height="21" ><use href="#i-col_nn"/></svg>
<div class="t mono" style="left:1201.4px;top:1018.3px;height:32px;line-height:32px;color:#a9b7c6">created_at</div>
<svg class="a" style="left:1367.5px;top:1028px" width="8.1" height="12.1" ><use href="#i-sortud"/></svg>
<svg class="a" style="left:1395px;top:1025px" width="23" height="21" ><use href="#i-col_nn"/></svg>
<div class="t mono" style="left:1423.7px;top:1018.3px;height:32px;line-height:32px;color:#a9b7c6">updated_at</div>
<svg class="a" style="left:1590.2px;top:1028px" width="8.1" height="12.1" ><use href="#i-sortud"/></svg>
<div class="a" style="left:16px;top:1453px;width:2283px;height:1px;background:#323232;"></div>
<div class="a" style="left:16px;top:1454px;width:2283px;height:30px;background:#3c3f41;"></div>
<div class="a" style="left:577px;top:1454px;width:126px;height:29px;background:#2d2f30;"></div>
<svg class="a" style="left:63px;top:1460px" width="17.5" height="17.5" ><use href="#i-bsearch"/></svg>
<div class="t " style="left:86.2px;top:1453.5px;height:32px;line-height:32px;font-size:16.4px">Find</div>
<svg class="a" style="left:153.8px;top:1460.5px" width="16" height="16" ><use href="#i-bproblems"/></svg>
<div class="t " style="left:176.5px;top:1453.5px;height:32px;line-height:32px;font-size:16.4px">Problems</div>
<svg class="a" style="left:285.5px;top:1458.5px" width="13.5" height="19" ><use href="#i-bgit"/></svg>
<div class="t " style="left:307.2px;top:1453.5px;height:32px;line-height:32px;font-size:16.4px">Git</div>
<svg class="a" style="left:363.6px;top:1461px" width="16.5" height="15" ><use href="#i-bterminal"/></svg>
<div class="t " style="left:386px;top:1453.5px;height:32px;line-height:32px;font-size:16.4px">Terminal</div>
<svg class="a" style="left:492.8px;top:1462.5px" width="15.5" height="13" ><use href="#i-btodo"/></svg>
<div class="t " style="left:514px;top:1453.5px;height:32px;line-height:32px;font-size:16.4px">TODO</div>
<svg class="a" style="left:594.3px;top:1459.5px" width="18.7" height="18" ><use href="#i-bservices"/></svg>
<div class="t " style="left:618.5px;top:1453.5px;height:32px;line-height:32px;font-size:16.4px;color:#dcdcdc">Services</div>
<div class="a" style="left:2146px;top:1459px;width:19px;height:19px;border-radius:9.5px 9.5px 3px 9.5px;background:#c9484d"></div>
<div class="t " style="left:2146px;top:1458px;height:20px;line-height:20px;width:19px;text-align:center;font-size:13px;font-weight:bold;color:#fff">7</div>
<div class="t " style="left:2170.5px;top:1453.5px;height:32px;line-height:32px;font-size:16.4px">Event Log</div>
<div class="a" style="left:16px;top:1484px;width:2283px;height:1px;background:#4b4b4b;"></div>
<div class="a" style="left:16px;top:1485px;width:2283px;height:30px;background:#3c3f41;"></div>
<svg class="a" style="left:24.5px;top:1490.5px" width="19" height="18" ><use href="#i-bstatus"/></svg>
<div class="t " style="left:58.4px;top:1484.1px;height:32px;line-height:32px;">TestNetwork.sqlite: main synchronized (519 ms) (2 minutes ago)</div>
<div class="t " style="left:1590px;top:1484.1px;height:32px;line-height:32px;">1:29</div>
<div class="t " style="left:1648px;top:1484.1px;height:32px;line-height:32px;">LF</div>
<div class="t " style="left:1686px;top:1484.1px;height:32px;line-height:32px;">UTF-8</div>
<div class="t " style="left:1756px;top:1484.1px;height:32px;line-height:32px;">4 spaces</div>
<svg class="a" style="left:1856px;top:1489.5px" width="13" height="21" ><use href="#i-bbranch"/></svg>
<div class="t " style="left:1878px;top:1484.1px;height:32px;line-height:32px;">persistence-v2-2</div>
<svg class="a" style="left:2043px;top:1491px" width="17" height="17" ><use href="#i-block"/></svg>
<svg class="a" style="left:2078px;top:1488.5px" width="25" height="21" ><use href="#i-bcloud"/></svg>
<svg class="a" style="left:2118px;top:1490.5px" width="18" height="18" ><use href="#i-bwarn"/></svg>
<div class="a" style="left:2145px;top:1485px;width:31px;height:29px;background:#5b5d5f;"></div>
<div class="t " style="left:2157px;top:1484.1px;height:32px;line-height:32px;">606 of 3072M</div>
</div>
</body></html>
